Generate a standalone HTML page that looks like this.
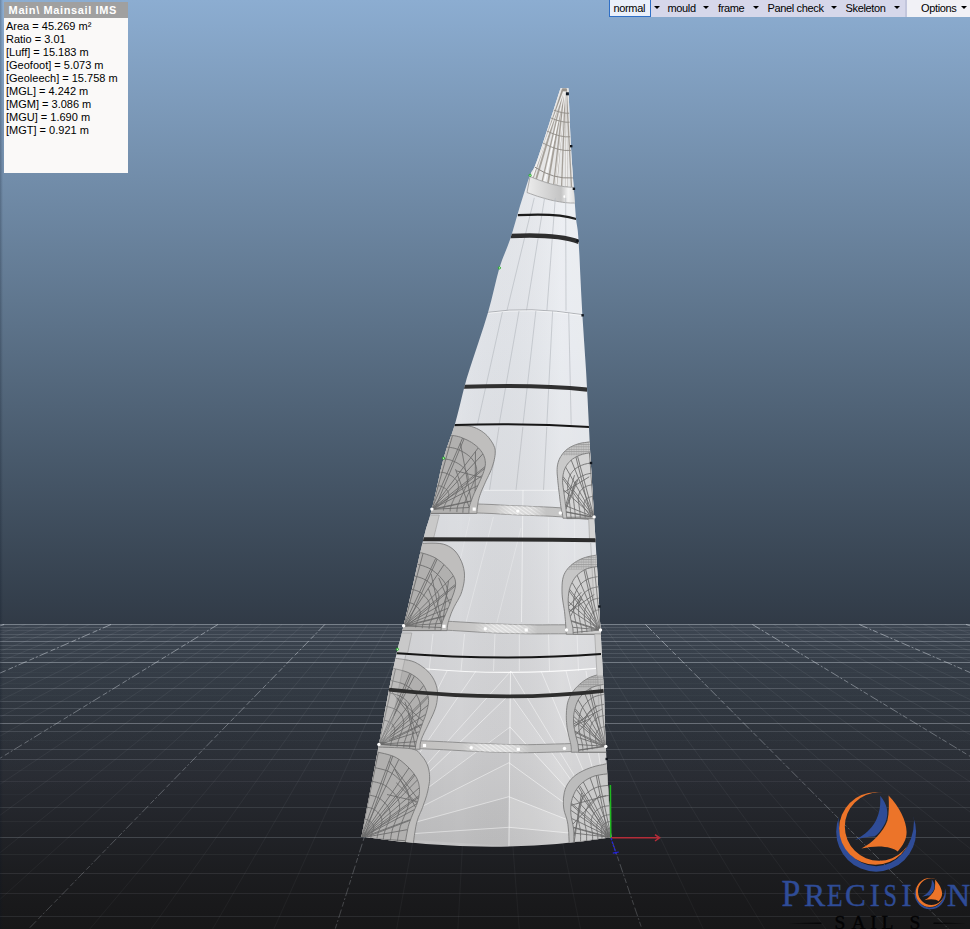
<!DOCTYPE html>
<html lang="en"><head><meta charset="utf-8"><title>Main\ Mainsail IMS</title>
<style>
html,body{margin:0;padding:0}
body{width:970px;height:929px;overflow:hidden;position:relative;font-family:"Liberation Sans",sans-serif;
background:linear-gradient(to bottom,#8cadd1 0px,#7692b0 150px,#60778f 300px,#48596b 460px,#343f4c 600px,#313a46 624px,#2d343d 700px,#282b32 780px,#212328 830px,#1c1d20 870px,#19191b 905px,#171718 929px)}
#edge{position:absolute;left:0;top:0;width:3px;height:929px;background:linear-gradient(to right,rgba(10,20,35,.26),rgba(10,20,35,.12) 50%,rgba(10,20,35,0))}
#vp{position:absolute;left:0;top:0;width:970px;height:929px;display:block}
#info{position:absolute;left:4px;top:2px;width:124px;height:171px;background:#faf9f8;font-size:11px;line-height:13px;color:#000}
#info .t{height:16px;line-height:17px;background:#a0a0a0;color:#fff;font-weight:bold;padding-left:4.6px;white-space:nowrap;letter-spacing:.62px}
#info .b{padding:2px 0 0 2px}
#info .r{height:13px;white-space:nowrap}
#tb{position:absolute;left:609px;top:0;width:361px;height:17px;background:#d6d7ea;font-size:11px;line-height:17px;color:#000;letter-spacing:-.35px}
#tb .o{position:absolute;left:296px;top:0;width:65px;height:17px;background:#f1f1f6;border-left:2px solid #c3c6dc;box-sizing:border-box}
#tb span{position:absolute;top:0;white-space:nowrap}
#tb .sel{position:absolute;left:0;top:-1px;width:42px;height:18px;box-sizing:border-box;border:1px solid #2f6fc6;background:#eaf0fa}
#tb i{position:absolute;top:6px;width:0;height:0;border-left:3px solid transparent;border-right:3px solid transparent;border-top:3px solid #000}
</style></head><body>
<svg id="vp" width="970" height="929" viewBox="0 0 970 929">
<defs>
<linearGradient id="sailg" gradientUnits="userSpaceOnUse" x1="0" y1="88" x2="0" y2="848"><stop offset="0" stop-color="#eef0f4"/><stop offset=".34" stop-color="#e6e9ee"/><stop offset=".55" stop-color="#dfe1e5"/><stop offset=".7" stop-color="#d9dadd"/><stop offset=".86" stop-color="#d3d3d5"/><stop offset="1" stop-color="#c6c6c7"/></linearGradient>
<linearGradient id="sailv" x1="0" y1="0" x2="1" y2="0"><stop offset="0" stop-color="#000" stop-opacity=".055"/><stop offset=".4" stop-color="#000" stop-opacity=".015"/><stop offset=".8" stop-color="#fff" stop-opacity=".12"/><stop offset="1" stop-color="#fff" stop-opacity=".02"/></linearGradient>
<linearGradient id="gmaj" gradientUnits="userSpaceOnUse" x1="0" y1="624" x2="0" y2="929"><stop offset="0" stop-color="#dde3ea" stop-opacity=".5"/><stop offset=".35" stop-color="#dde3ea" stop-opacity=".34"/><stop offset="1" stop-color="#dde3ea" stop-opacity=".2"/></linearGradient>
<linearGradient id="gmin" gradientUnits="userSpaceOnUse" x1="0" y1="624" x2="0" y2="929"><stop offset="0" stop-color="#d5dbe2" stop-opacity=".07"/><stop offset=".5" stop-color="#d5dbe2" stop-opacity=".055"/><stop offset="1" stop-color="#d5dbe2" stop-opacity=".04"/></linearGradient>
<linearGradient id="bandg" x1="0" y1="0" x2="1" y2="0"><stop offset="0" stop-color="#ececec"/><stop offset=".45" stop-color="#d2d2d2"/><stop offset=".7" stop-color="#c4c4c4"/><stop offset=".85" stop-color="#f2f2f2"/><stop offset="1" stop-color="#dcdcdc"/></linearGradient>
<linearGradient id="reefg" x1="0" y1="0" x2="1" y2="0"><stop offset="0" stop-color="#bdbbb9"/><stop offset=".3" stop-color="#c5c4c3"/><stop offset=".5" stop-color="#d2d2d2"/><stop offset=".68" stop-color="#c4c4c4"/><stop offset="1" stop-color="#c8c8c8"/></linearGradient>
<pattern id="hatch" width="3" height="3" patternUnits="userSpaceOnUse" patternTransform="rotate(35)"><rect width="3" height="3" fill="none"/><line x1="0" y1="1.5" x2="3" y2="1.5" stroke="#fff" stroke-opacity=".55" stroke-width=".9"/></pattern>
<pattern id="mesh" width="2.4" height="2.4" patternUnits="userSpaceOnUse"><path d="M0 .5H2.4" stroke="#8a8a8a" stroke-width=".6" fill="none"/><path d="M.5 0V2.4" stroke="#9a9a9a" stroke-width=".35" fill="none"/></pattern>
<linearGradient id="hfade" x1="0" y1="0" x2="1" y2="0"><stop offset="0" stop-color="#000"/><stop offset=".3" stop-color="#fff"/><stop offset=".7" stop-color="#fff"/><stop offset="1" stop-color="#000"/></linearGradient>
<clipPath id="sailclip"><path d="M560.5 88.3 L555.9 102.5 L549.3 123.2 L542.4 144.4 L537.2 160 L534.3 167.4 L532.8 170.2 L531.6 171.7 L530 175.3 L527.7 181.8 L525.2 189.5 L522.6 197.7 L520 206 L517.5 214.4 L515 223.2 L512.5 231.8 L509.9 240 L507.3 247 L504.7 253.4 L502.1 260 L499.4 268 L496.8 277.7 L494.2 288.4 L491.4 300 L488.1 312.3 L483.8 326.3 L478.7 341.8 L473.8 356.5 L470 368.1 L467.8 374.9 L466.7 378.4 L465.9 381.4 L464.5 386.5 L462.4 394.8 L460 404.7 L457.4 415.1 L454.8 424.8 L452.1 433.1 L449.3 440.7 L446.5 448.7 L443.6 458.2 L440.6 470.2 L437.6 483.9 L434.6 497.4 L431.9 509.1 L429.8 516.7 L428.2 521.9 L426.2 528.1 L423.4 539.1 L418.9 558.3 L413.4 582.8 L407.9 607.2 L403.6 625.8 L401.1 635.9 L399.8 640.9 L398.8 644.3 L397.4 650 L395.5 658.4 L393.4 667.8 L391.3 678.1 L389 689.4 L386.8 701.2 L384.5 713.6 L382 727.7 L378.9 744.4 L374.7 767 L369.6 793.9 L364.8 819.1 L361.5 836.5 Q492 856.5 611.3 837.3 L611.3 837.3 L610.2 820.1 L608.7 795.3 L607 768.8 L605.8 746.4 L605.1 729.2 L604.6 714.1 L604.3 701.4 L604 691 L603.7 684.5 L603.5 681.2 L603.2 678.4 L602.9 673 L602.4 663.6 L601.7 651.8 L601.1 640 L600.5 630 L600.2 623.8 L599.9 619.7 L599.7 615 L599.2 606.5 L598.4 591.8 L597.4 573 L596.3 554.2 L595.5 539.6 L595 531.5 L594.8 527.4 L594.5 523.7 L594.1 516.9 L593.4 505.2 L592.5 490.8 L591.6 476 L590.8 463 L590.2 453 L589.8 444.6 L589.4 436.2 L588.9 426 L588.3 413.3 L587.6 399.2 L586.8 384.4 L586 370 L585.1 356.4 L584.2 343.1 L583.3 329.3 L582.3 314 L581.3 295.5 L580.3 274.9 L579.4 255.3 L578.5 240 L577.8 231 L577.1 226.2 L576.5 222.8 L575.9 218 L575.4 211.5 L574.9 204.6 L574.4 197 L573.8 188.6 L573.1 179.3 L572.4 169.2 L571.6 158.2 L570.9 146.2 L570.2 131.5 L569.5 114.6 L568.9 99.1 L568.5 88.3Z"/></clipPath>
</defs>
<linearGradient id="haze" gradientUnits="userSpaceOnUse" x1="0" y1="624" x2="0" y2="800"><stop offset="0" stop-color="#dfe6ee" stop-opacity=".07"/><stop offset=".22" stop-color="#dfe6ee" stop-opacity=".04"/><stop offset=".45" stop-color="#dfe6ee" stop-opacity=".022"/><stop offset=".8" stop-color="#dfe6ee" stop-opacity=".008"/><stop offset="1" stop-color="#dfe6ee" stop-opacity="0"/></linearGradient>
<rect x="0" y="624" width="970" height="176" fill="url(#haze)"/>
<g id="grid" fill="none" shape-rendering="auto">
<path d="M0 624.5H970" stroke="#cfd6df" stroke-opacity="0.4" stroke-width="1"/>
<path d="M0 627.5H970" stroke="#cfd6df" stroke-opacity="0.15" stroke-width="1"/>
<path d="M0 630.5H970" stroke="#cfd6df" stroke-opacity="0.09" stroke-width="1"/>
<path d="M0 634.5H970" stroke="#cfd6df" stroke-opacity="0.15" stroke-width="1"/>
<path d="M0 637.5H970" stroke="#cfd6df" stroke-opacity="0.15" stroke-width="1"/>
<path d="M0 641.5H970" stroke="#cfd6df" stroke-opacity="0.32" stroke-width="1"/>
<path d="M0 645.5H970" stroke="#cfd6df" stroke-opacity="0.15" stroke-width="1"/>
<path d="M0 649.5H970" stroke="#cfd6df" stroke-opacity="0.15" stroke-width="1"/>
<path d="M0 653.5H970" stroke="#cfd6df" stroke-opacity="0.15" stroke-width="1"/>
<path d="M0 657.5H970" stroke="#cfd6df" stroke-opacity="0.13" stroke-width="1"/>
<path d="M0 662.5H970" stroke="#cfd6df" stroke-opacity="0.4" stroke-width="1"/>
<path d="M0 667.5H970" stroke="#cfd6df" stroke-opacity="0.03" stroke-width="1"/>
<path d="M0 672.5H970" stroke="#cfd6df" stroke-opacity="0.03" stroke-width="1"/>
<path d="M0 677.5H970" stroke="#cfd6df" stroke-opacity="0.16" stroke-width="1"/>
<path d="M0 683.5H970" stroke="#cfd6df" stroke-opacity="0.03" stroke-width="1"/>
<path d="M0 688.5H970" stroke="#cfd6df" stroke-opacity="0.21" stroke-width="1"/>
<path d="M0 695.5H970" stroke="#cfd6df" stroke-opacity="0.03" stroke-width="1"/>
<path d="M0 701.5H970" stroke="#cfd6df" stroke-opacity="0.16" stroke-width="1"/>
<path d="M0 708.5H970" stroke="#cfd6df" stroke-opacity="0.16" stroke-width="1"/>
<path d="M0 715.5H970" stroke="#cfd6df" stroke-opacity="0.16" stroke-width="1"/>
<path d="M0 723.5H970" stroke="#cfd6df" stroke-opacity="0.36" stroke-width="1"/>
<path d="M0 731.5H970" stroke="#cfd6df" stroke-opacity="0.15" stroke-width="1"/>
<path d="M0 740.5H970" stroke="#cfd6df" stroke-opacity="0.03" stroke-width="1"/>
<path d="M0 749.5H970" stroke="#cfd6df" stroke-opacity="0.16" stroke-width="1"/>
<path d="M0 759.5H970" stroke="#cfd6df" stroke-opacity="0.16" stroke-width="1"/>
<path d="M0 770.5H970" stroke="#cfd6df" stroke-opacity="0.04" stroke-width="1"/>
<path d="M0 781.5H970" stroke="#cfd6df" stroke-opacity="0.07" stroke-width="1"/>
<path d="M0 794.5H970" stroke="#cfd6df" stroke-opacity="0.03" stroke-width="1"/>
<path d="M0 807.5H970" stroke="#cfd6df" stroke-opacity="0.12" stroke-width="1"/>
<path d="M0 821.5H970" stroke="#cfd6df" stroke-opacity="0.05" stroke-width="1"/>
<path d="M0 837.5H970" stroke="#cfd6df" stroke-opacity="0.2" stroke-width="1"/>
<path d="M0 854.5H970" stroke="#cfd6df" stroke-opacity="0.06" stroke-width="1"/>
<path d="M0 873.5H970" stroke="#cfd6df" stroke-opacity="0.11" stroke-width="1"/>
<path d="M0 893.5H970" stroke="#cfd6df" stroke-opacity="0.09" stroke-width="1"/>
<path d="M0 916.5H970" stroke="#cfd6df" stroke-opacity="0.1" stroke-width="1"/>
<path d="M-188.3 624.5L-1468.3 935" stroke="url(#gmin)" stroke-width="1"/>
<path d="M-166.9 624.5L-1406.2 935" stroke="url(#gmin)" stroke-width="1"/>
<path d="M-145.5 624.5L-1344.1 935" stroke="url(#gmin)" stroke-width="1"/>
<path d="M-124.1 624.5L-1281.9 935" stroke="url(#gmin)" stroke-width="1"/>
<path d="M-102.8 624.5L-1219.8 935" stroke="url(#gmaj)" stroke-width="1" stroke-dasharray="9 2 2 2 5 3"/>
<path d="M-81.4 624.5L-1157.7 935" stroke="url(#gmin)" stroke-width="1"/>
<path d="M-60 624.5L-1095.6 935" stroke="url(#gmin)" stroke-width="1"/>
<path d="M-38.6 624.5L-1033.4 935" stroke="url(#gmin)" stroke-width="1"/>
<path d="M-17.2 624.5L-971.3 935" stroke="url(#gmin)" stroke-width="1"/>
<path d="M4.1 624.5L-909.2 935" stroke="url(#gmaj)" stroke-width="1" stroke-dasharray="9 2 2 2 5 3"/>
<path d="M25.5 624.5L-847.1 935" stroke="url(#gmin)" stroke-width="1"/>
<path d="M46.9 624.5L-784.9 935" stroke="url(#gmin)" stroke-width="1"/>
<path d="M68.3 624.5L-722.8 935" stroke="url(#gmin)" stroke-width="1"/>
<path d="M89.6 624.5L-660.7 935" stroke="url(#gmin)" stroke-width="1"/>
<path d="M111 624.5L-598.6 935" stroke="url(#gmaj)" stroke-width="1" stroke-dasharray="9 2 2 2 5 3"/>
<path d="M132.4 624.5L-536.4 935" stroke="url(#gmin)" stroke-width="1"/>
<path d="M153.8 624.5L-474.3 935" stroke="url(#gmin)" stroke-width="1"/>
<path d="M175.2 624.5L-412.2 935" stroke="url(#gmin)" stroke-width="1"/>
<path d="M196.5 624.5L-350.1 935" stroke="url(#gmin)" stroke-width="1"/>
<path d="M217.9 624.5L-287.9 935" stroke="url(#gmaj)" stroke-width="1" stroke-dasharray="9 2 2 2 5 3"/>
<path d="M239.3 624.5L-225.8 935" stroke="url(#gmin)" stroke-width="1"/>
<path d="M260.7 624.5L-163.7 935" stroke="url(#gmin)" stroke-width="1"/>
<path d="M282 624.5L-101.6 935" stroke="url(#gmin)" stroke-width="1"/>
<path d="M303.4 624.5L-39.4 935" stroke="url(#gmin)" stroke-width="1"/>
<path d="M324.8 624.5L22.7 935" stroke="url(#gmaj)" stroke-width="1" stroke-dasharray="9 2 2 2 5 3"/>
<path d="M346.2 624.5L84.8 935" stroke="url(#gmin)" stroke-width="1"/>
<path d="M367.6 624.5L146.9 935" stroke="url(#gmin)" stroke-width="1"/>
<path d="M388.9 624.5L209.1 935" stroke="url(#gmin)" stroke-width="1"/>
<path d="M410.3 624.5L271.2 935" stroke="url(#gmin)" stroke-width="1"/>
<path d="M431.7 624.5L333.3 935" stroke="url(#gmaj)" stroke-width="1" stroke-dasharray="9 2 2 2 5 3"/>
<path d="M453.1 624.5L395.5 935" stroke="url(#gmin)" stroke-width="1"/>
<path d="M474.4 624.5L457.6 935" stroke="url(#gmin)" stroke-width="1"/>
<path d="M495.8 624.5L519.7 935" stroke="url(#gmin)" stroke-width="1"/>
<path d="M517.2 624.5L581.8 935" stroke="url(#gmin)" stroke-width="1"/>
<path d="M538.6 624.5L644 935" stroke="url(#gmaj)" stroke-width="1" stroke-dasharray="9 2 2 2 5 3"/>
<path d="M560 624.5L706.1 935" stroke="url(#gmin)" stroke-width="1"/>
<path d="M581.3 624.5L768.2 935" stroke="url(#gmin)" stroke-width="1"/>
<path d="M602.7 624.5L830.3 935" stroke="url(#gmin)" stroke-width="1"/>
<path d="M624.1 624.5L892.5 935" stroke="url(#gmin)" stroke-width="1"/>
<path d="M645.5 624.5L954.6 935" stroke="url(#gmaj)" stroke-width="1" stroke-dasharray="9 2 2 2 5 3"/>
<path d="M666.9 624.5L1016.7 935" stroke="url(#gmin)" stroke-width="1"/>
<path d="M688.2 624.5L1078.8 935" stroke="url(#gmin)" stroke-width="1"/>
<path d="M709.6 624.5L1141 935" stroke="url(#gmin)" stroke-width="1"/>
<path d="M731 624.5L1203.1 935" stroke="url(#gmin)" stroke-width="1"/>
<path d="M752.4 624.5L1265.2 935" stroke="url(#gmaj)" stroke-width="1" stroke-dasharray="9 2 2 2 5 3"/>
<path d="M773.7 624.5L1327.3 935" stroke="url(#gmin)" stroke-width="1"/>
<path d="M795.1 624.5L1389.5 935" stroke="url(#gmin)" stroke-width="1"/>
<path d="M816.5 624.5L1451.6 935" stroke="url(#gmin)" stroke-width="1"/>
<path d="M837.9 624.5L1513.7 935" stroke="url(#gmin)" stroke-width="1"/>
<path d="M859.3 624.5L1575.8 935" stroke="url(#gmaj)" stroke-width="1" stroke-dasharray="9 2 2 2 5 3"/>
<path d="M880.6 624.5L1638 935" stroke="url(#gmin)" stroke-width="1"/>
<path d="M902 624.5L1700.1 935" stroke="url(#gmin)" stroke-width="1"/>
<path d="M923.4 624.5L1762.2 935" stroke="url(#gmin)" stroke-width="1"/>
<path d="M944.8 624.5L1824.4 935" stroke="url(#gmin)" stroke-width="1"/>
<path d="M966.1 624.5L1886.5 935" stroke="url(#gmaj)" stroke-width="1" stroke-dasharray="9 2 2 2 5 3"/>
<path d="M987.5 624.5L1948.6 935" stroke="url(#gmin)" stroke-width="1"/>
<path d="M1008.9 624.5L2010.7 935" stroke="url(#gmin)" stroke-width="1"/>
<path d="M1030.3 624.5L2072.9 935" stroke="url(#gmin)" stroke-width="1"/>
<path d="M1051.7 624.5L2135 935" stroke="url(#gmin)" stroke-width="1"/>
<path d="M1073 624.5L2197.1 935" stroke="url(#gmaj)" stroke-width="1" stroke-dasharray="9 2 2 2 5 3"/>
<path d="M1094.4 624.5L2259.2 935" stroke="url(#gmin)" stroke-width="1"/>
<path d="M1115.8 624.5L2321.4 935" stroke="url(#gmin)" stroke-width="1"/>
<path d="M1137.2 624.5L2383.5 935" stroke="url(#gmin)" stroke-width="1"/>
<path d="M1158.5 624.5L2445.6 935" stroke="url(#gmin)" stroke-width="1"/>
<path d="M1179.9 624.5L2507.7 935" stroke="url(#gmaj)" stroke-width="1" stroke-dasharray="9 2 2 2 5 3"/>
</g>
<g id="sail">
<path d="M560.5 88.3 L555.9 102.5 L549.3 123.2 L542.4 144.4 L537.2 160 L534.3 167.4 L532.8 170.2 L531.6 171.7 L530 175.3 L527.7 181.8 L525.2 189.5 L522.6 197.7 L520 206 L517.5 214.4 L515 223.2 L512.5 231.8 L509.9 240 L507.3 247 L504.7 253.4 L502.1 260 L499.4 268 L496.8 277.7 L494.2 288.4 L491.4 300 L488.1 312.3 L483.8 326.3 L478.7 341.8 L473.8 356.5 L470 368.1 L467.8 374.9 L466.7 378.4 L465.9 381.4 L464.5 386.5 L462.4 394.8 L460 404.7 L457.4 415.1 L454.8 424.8 L452.1 433.1 L449.3 440.7 L446.5 448.7 L443.6 458.2 L440.6 470.2 L437.6 483.9 L434.6 497.4 L431.9 509.1 L429.8 516.7 L428.2 521.9 L426.2 528.1 L423.4 539.1 L418.9 558.3 L413.4 582.8 L407.9 607.2 L403.6 625.8 L401.1 635.9 L399.8 640.9 L398.8 644.3 L397.4 650 L395.5 658.4 L393.4 667.8 L391.3 678.1 L389 689.4 L386.8 701.2 L384.5 713.6 L382 727.7 L378.9 744.4 L374.7 767 L369.6 793.9 L364.8 819.1 L361.5 836.5 Q492 856.5 611.3 837.3 L611.3 837.3 L610.2 820.1 L608.7 795.3 L607 768.8 L605.8 746.4 L605.1 729.2 L604.6 714.1 L604.3 701.4 L604 691 L603.7 684.5 L603.5 681.2 L603.2 678.4 L602.9 673 L602.4 663.6 L601.7 651.8 L601.1 640 L600.5 630 L600.2 623.8 L599.9 619.7 L599.7 615 L599.2 606.5 L598.4 591.8 L597.4 573 L596.3 554.2 L595.5 539.6 L595 531.5 L594.8 527.4 L594.5 523.7 L594.1 516.9 L593.4 505.2 L592.5 490.8 L591.6 476 L590.8 463 L590.2 453 L589.8 444.6 L589.4 436.2 L588.9 426 L588.3 413.3 L587.6 399.2 L586.8 384.4 L586 370 L585.1 356.4 L584.2 343.1 L583.3 329.3 L582.3 314 L581.3 295.5 L580.3 274.9 L579.4 255.3 L578.5 240 L577.8 231 L577.1 226.2 L576.5 222.8 L575.9 218 L575.4 211.5 L574.9 204.6 L574.4 197 L573.8 188.6 L573.1 179.3 L572.4 169.2 L571.6 158.2 L570.9 146.2 L570.2 131.5 L569.5 114.6 L568.9 99.1 L568.5 88.3Z" fill="url(#sailg)"/>
<path d="M560.5 88.3 L555.9 102.5 L549.3 123.2 L542.4 144.4 L537.2 160 L534.3 167.4 L532.8 170.2 L531.6 171.7 L530 175.3 L527.7 181.8 L525.2 189.5 L522.6 197.7 L520 206 L517.5 214.4 L515 223.2 L512.5 231.8 L509.9 240 L507.3 247 L504.7 253.4 L502.1 260 L499.4 268 L496.8 277.7 L494.2 288.4 L491.4 300 L488.1 312.3 L483.8 326.3 L478.7 341.8 L473.8 356.5 L470 368.1 L467.8 374.9 L466.7 378.4 L465.9 381.4 L464.5 386.5 L462.4 394.8 L460 404.7 L457.4 415.1 L454.8 424.8 L452.1 433.1 L449.3 440.7 L446.5 448.7 L443.6 458.2 L440.6 470.2 L437.6 483.9 L434.6 497.4 L431.9 509.1 L429.8 516.7 L428.2 521.9 L426.2 528.1 L423.4 539.1 L418.9 558.3 L413.4 582.8 L407.9 607.2 L403.6 625.8 L401.1 635.9 L399.8 640.9 L398.8 644.3 L397.4 650 L395.5 658.4 L393.4 667.8 L391.3 678.1 L389 689.4 L386.8 701.2 L384.5 713.6 L382 727.7 L378.9 744.4 L374.7 767 L369.6 793.9 L364.8 819.1 L361.5 836.5 Q492 856.5 611.3 837.3 L611.3 837.3 L610.2 820.1 L608.7 795.3 L607 768.8 L605.8 746.4 L605.1 729.2 L604.6 714.1 L604.3 701.4 L604 691 L603.7 684.5 L603.5 681.2 L603.2 678.4 L602.9 673 L602.4 663.6 L601.7 651.8 L601.1 640 L600.5 630 L600.2 623.8 L599.9 619.7 L599.7 615 L599.2 606.5 L598.4 591.8 L597.4 573 L596.3 554.2 L595.5 539.6 L595 531.5 L594.8 527.4 L594.5 523.7 L594.1 516.9 L593.4 505.2 L592.5 490.8 L591.6 476 L590.8 463 L590.2 453 L589.8 444.6 L589.4 436.2 L588.9 426 L588.3 413.3 L587.6 399.2 L586.8 384.4 L586 370 L585.1 356.4 L584.2 343.1 L583.3 329.3 L582.3 314 L581.3 295.5 L580.3 274.9 L579.4 255.3 L578.5 240 L577.8 231 L577.1 226.2 L576.5 222.8 L575.9 218 L575.4 211.5 L574.9 204.6 L574.4 197 L573.8 188.6 L573.1 179.3 L572.4 169.2 L571.6 158.2 L570.9 146.2 L570.2 131.5 L569.5 114.6 L568.9 99.1 L568.5 88.3Z" fill="url(#sailv)"/>
<g clip-path="url(#sailclip)">
<path d="M558 86 L571 86 L573.8 187.3 L571.5 187.3 L569.1 187.1 L566.6 186.9 L564.1 186.6 L561.6 186.2 L559 185.8 L556.3 185.2 L553.6 184.6 L550.8 183.9 L548 183.1 L545.1 182.2 L542.2 181.2 L539.2 180.2 L536.2 179 L533.1 177.8 L530 176.5Z" fill="#e6e6e6"/>
<path d="M562.8 88.5L533.1 177.8" stroke="#9a948c" stroke-opacity=".85" stroke-width="1.3"/>
<path d="M563.2 88.5L536.2 179" stroke="#9a948c" stroke-opacity=".85" stroke-width="1.8"/>
<path d="M563.7 88.5L542.2 181.2" stroke="#9a948c" stroke-opacity=".85" stroke-width="1.3"/>
<path d="M564.1 88.5L548 183.1" stroke="#9a948c" stroke-opacity=".85" stroke-width="1.8"/>
<path d="M564.5 88.5L553.6 184.6" stroke="#9a948c" stroke-opacity=".85" stroke-width="1.3"/>
<path d="M565 88.5L556.3 185.2" stroke="#9a948c" stroke-opacity=".85" stroke-width="1.8"/>
<path d="M565.4 88.5L561.6 186.2" stroke="#9a948c" stroke-opacity=".85" stroke-width="1.3"/>
<path d="M565.9 88.5L566.6 186.9" stroke="#9a948c" stroke-opacity=".85" stroke-width="1.8"/>
<path d="M566.3 88.5L571.5 187.3" stroke="#9a948c" stroke-opacity=".85" stroke-width="1.3"/>
<path d="M563.6 91.5L532.5 176.5" stroke="#fff" stroke-opacity=".8" stroke-width="1.3"/>
<path d="M564.4 91.5L544.7 181.2" stroke="#fff" stroke-opacity=".8" stroke-width="1.3"/>
<path d="M565.1 91.5L556.1 184.6" stroke="#fff" stroke-opacity=".8" stroke-width="1.3"/>
<path d="M565.9 91.5L566.6 186.6" stroke="#fff" stroke-opacity=".8" stroke-width="1.3"/>
<path d="M553.5 110 Q563.5 113.8 569.5 113.2" stroke="#8f8b86" stroke-width=".9" fill="none"/>
<path d="M551 118 Q562.4 122.9 569.8 122.2" stroke="#8f8b86" stroke-width=".9" fill="none"/>
<path d="M546.8 131 Q560.6 137.8 570.5 136.8" stroke="#8f8b86" stroke-width=".9" fill="none"/>
<path d="M542.9 143 Q559 151.7 571.1 150.4" stroke="#8f8b86" stroke-width=".9" fill="none"/>
<path d="M534.8 167.1 Q553.4 179.5 572.8 177.9" stroke="#8f8b86" stroke-width="1" fill="none"/>
<path d="M530 176.5 L533.1 177.8 L536.2 179 L539.2 180.2 L542.2 181.2 L545.1 182.2 L548 183.1 L550.8 183.9 L553.6 184.6 L556.3 185.2 L559 185.8 L561.6 186.2 L564.1 186.6 L566.6 186.9 L569.1 187.1 L571.5 187.3 L573.8 187.3 L575.5 203 L573 203 L570.5 203 L567.8 202.8 L565.1 202.6 L562.4 202.3 L559.5 201.8 L556.6 201.3 L553.6 200.7 L550.5 200 L547.4 199.2 L544.2 198.3 L540.9 197.3 L537.5 196.3 L534.1 195.1 L530.6 193.8 L527 192.5Z" fill="url(#bandg)" stroke="#9b9b9b" stroke-width=".8"/>
<ellipse cx="564.2" cy="196.5" rx=".8" ry="1.6" fill="#fff"/>
<path d="M534.3 197.8L506.9 310.8" stroke="#b9bdc3" stroke-width=".7"/>
<path d="M544.6 197.8L526.5 310.5" stroke="#b9bdc3" stroke-width=".7"/>
<path d="M555.3 197.8L546.9 310.5" stroke="#b9bdc3" stroke-width=".7"/>
<path d="M565.7 197.8L566 310.8" stroke="#b9bdc3" stroke-width=".7"/>
<path d="M488.1 312.3 Q528.8 306.1 582.3 314.6" stroke="#a9abb0" stroke-width=".9" fill="none"/>
<path d="M488.1 313.3 Q528.8 307.1 582.3 315.6" stroke="#fff" stroke-opacity=".7" stroke-width=".8" fill="none"/>
<path d="M502.4 312L477.3 425" stroke="#b9bdc3" stroke-width=".7"/>
<path d="M519 311.1L499 425" stroke="#b9bdc3" stroke-width=".7"/>
<path d="M535.9 310.8L522.9 425" stroke="#b9bdc3" stroke-width=".7"/>
<path d="M552.6 311.1L546.8 425" stroke="#b9bdc3" stroke-width=".7"/>
<path d="M568.7 312.3L571.2 425" stroke="#b9bdc3" stroke-width=".7"/>
<path d="M499 427L489.5 490" stroke="#b9bbc0" stroke-width=".7"/>
<path d="M522.9 427L516 490" stroke="#b9bbc0" stroke-width=".7"/>
<path d="M546.8 427L543.5 490" stroke="#b9bbc0" stroke-width=".7"/>
<path d="M523 490L521.5 622" stroke="#fff" stroke-opacity="0.58" stroke-width=".9"/>
<path d="M484 490.3L558 490.3" stroke="#fff" stroke-opacity="0.58" stroke-width=".9"/>
<path d="M493.4 517L465.8 623" stroke="#fff" stroke-opacity="0.32" stroke-width=".9"/>
<path d="M521 528L496.8 623" stroke="#fff" stroke-opacity="0.29" stroke-width=".9"/>
<path d="M548.5 517L548.5 623" stroke="#fff" stroke-opacity="0.25" stroke-width=".9"/>
<path d="M574.3 517L575.5 623" stroke="#fff" stroke-opacity="0.25" stroke-width=".9"/>
<path d="M470 517L446 623" stroke="#fff" stroke-opacity="0.22" stroke-width=".9"/>
<path d="M433 634L429 671" stroke="#fff" stroke-opacity="0.43" stroke-width=".9"/>
<path d="M464.5 634L461 671" stroke="#fff" stroke-opacity="0.43" stroke-width=".9"/>
<path d="M495 634L493.5 671" stroke="#fff" stroke-opacity="0.43" stroke-width=".9"/>
<path d="M519.3 634L519.3 671" stroke="#fff" stroke-opacity="0.43" stroke-width=".9"/>
<path d="M548.5 634L549.5 671" stroke="#fff" stroke-opacity="0.43" stroke-width=".9"/>
<path d="M577 634L578.5 671" stroke="#fff" stroke-opacity="0.43" stroke-width=".9"/>
<path d="M510.5 671L508.9 846" stroke="#fff" stroke-opacity="0.65" stroke-width=".9"/>
<path d="M361.5 837L508.9 827.3" stroke="#fff" stroke-opacity="0.58" stroke-width=".9"/>
<path d="M611.3 837L508.9 827.3" stroke="#fff" stroke-opacity="0.58" stroke-width=".9"/>
<path d="M361.5 837L508.9 796.7" stroke="#fff" stroke-opacity="0.58" stroke-width=".9"/>
<path d="M611.3 837L508.9 796.7" stroke="#fff" stroke-opacity="0.58" stroke-width=".9"/>
<path d="M361.5 837L508.9 762.7" stroke="#fff" stroke-opacity="0.58" stroke-width=".9"/>
<path d="M611.3 837L508.9 762.7" stroke="#fff" stroke-opacity="0.58" stroke-width=".9"/>
<path d="M361.5 837L510.1 727" stroke="#fff" stroke-opacity="0.58" stroke-width=".9"/>
<path d="M611.3 837L510.1 727" stroke="#fff" stroke-opacity="0.58" stroke-width=".9"/>
<path d="M361.5 837L510.1 694" stroke="#fff" stroke-opacity="0.58" stroke-width=".9"/>
<path d="M611.3 837L510.1 694" stroke="#fff" stroke-opacity="0.58" stroke-width=".9"/>
<path d="M361.5 837L511 671" stroke="#fff" stroke-opacity="0.5" stroke-width=".9"/>
<path d="M361.5 837L476 671" stroke="#fff" stroke-opacity="0.5" stroke-width=".9"/>
<path d="M361.5 837L447 671" stroke="#fff" stroke-opacity="0.5" stroke-width=".9"/>
<path d="M361.5 837L424 671" stroke="#fff" stroke-opacity="0.5" stroke-width=".9"/>
<path d="M611.3 837L511 671" stroke="#fff" stroke-opacity="0.5" stroke-width=".9"/>
<path d="M611.3 837L541 671" stroke="#fff" stroke-opacity="0.5" stroke-width=".9"/>
<path d="M611.3 837L566 671" stroke="#fff" stroke-opacity="0.5" stroke-width=".9"/>
<path d="M611.3 837L586 671" stroke="#fff" stroke-opacity="0.5" stroke-width=".9"/>
<path d="M424 668.8 Q508 676.2 596 668.4" stroke="#fff" stroke-opacity=".85" stroke-width="1.1" fill="none"/>
<path d="M361.5 837L508.9 762.7L508.9 846Z" fill="#000" fill-opacity=".03"/>
<path d="M611.3 837L508.9 796.7L508.9 827.3Z" fill="#fff" fill-opacity=".14"/>
<path d="M361.5 837L508.9 796.7L508.9 762.7Z" fill="#fff" fill-opacity=".10"/>
<path d="M611.3 837L508.9 727L508.9 694Z" fill="#fff" fill-opacity=".10"/>
<path d="M361.5 837L508.9 762.7L508.9 727Z" fill="#000" fill-opacity=".025"/>
<path d="M426.9 503.9 L433.4 503.8 L442.6 503.8 L453.3 503.7 L464.2 503.8 L474.2 503.9 L483.2 504.2 L492 504.5 L500.6 505 L509.2 505.5 L517.8 505.9 L526.4 506.2 L535.1 506.6 L543.6 506.9 L552.1 507.3 L560.3 507.8 L568.9 508.5 L577.9 509.4 L586.6 510.3 L593.9 511.1 L599.1 511.7 L599.1 520.7 L593.9 520.1 L586.6 519.3 L577.9 518.4 L568.9 517.5 L560.3 516.8 L552.1 516.3 L543.6 515.9 L535.1 515.6 L526.4 515.2 L517.8 514.9 L509.2 514.5 L500.6 514 L492 513.5 L483.2 513.2 L474.2 512.9 L464.2 512.8 L453.3 512.7 L442.6 512.8 L433.4 512.8 L426.9 512.9Z" fill="url(#reefg)" stroke="#8a8a8a" stroke-width=".9"/>
<mask id="hx194" maskUnits="userSpaceOnUse" x="495" y="489.1" width="52" height="40"><rect x="495" y="489.1" width="52" height="40" fill="url(#hfade)"/></mask>
<g mask="url(#hx194)"><path d="M426.9 503.9 L433.4 503.8 L442.6 503.8 L453.3 503.7 L464.2 503.8 L474.2 503.9 L483.2 504.2 L492 504.5 L500.6 505 L509.2 505.5 L517.8 505.9 L526.4 506.2 L535.1 506.6 L543.6 506.9 L552.1 507.3 L560.3 507.8 L568.9 508.5 L577.9 509.4 L586.6 510.3 L593.9 511.1 L599.1 511.7 L599.1 520.7 L593.9 520.1 L586.6 519.3 L577.9 518.4 L568.9 517.5 L560.3 516.8 L552.1 516.3 L543.6 515.9 L535.1 515.6 L526.4 515.2 L517.8 514.9 L509.2 514.5 L500.6 514 L492 513.5 L483.2 513.2 L474.2 512.9 L464.2 512.8 L453.3 512.7 L442.6 512.8 L433.4 512.8 L426.9 512.9Z" fill="#e8e8e8" fill-opacity=".5"/><path d="M426.9 503.9 L433.4 503.8 L442.6 503.8 L453.3 503.7 L464.2 503.8 L474.2 503.9 L483.2 504.2 L492 504.5 L500.6 505 L509.2 505.5 L517.8 505.9 L526.4 506.2 L535.1 506.6 L543.6 506.9 L552.1 507.3 L560.3 507.8 L568.9 508.5 L577.9 509.4 L586.6 510.3 L593.9 511.1 L599.1 511.7 L599.1 520.7 L593.9 520.1 L586.6 519.3 L577.9 518.4 L568.9 517.5 L560.3 516.8 L552.1 516.3 L543.6 515.9 L535.1 515.6 L526.4 515.2 L517.8 514.9 L509.2 514.5 L500.6 514 L492 513.5 L483.2 513.2 L474.2 512.9 L464.2 512.8 L453.3 512.7 L442.6 512.8 L433.4 512.8 L426.9 512.9Z" fill="url(#hatch)"/></g>
<path d="M398.6 620.6 L404.8 620.6 L413.7 620.7 L424 620.7 L434.5 620.9 L444 621.1 L452.5 621.5 L460.8 622 L469 622.5 L477.1 623 L485.3 623.5 L493.5 623.8 L501.7 624.1 L509.9 624.4 L518.1 624.6 L526.2 624.8 L534.3 624.9 L542.4 624.9 L550.5 624.8 L558.5 624.8 L566.5 624.8 L575 624.8 L584.1 624.8 L592.8 624.8 L600.2 624.8 L605.5 624.8 L605.5 633.8 L600.2 633.8 L592.8 633.8 L584.1 633.8 L575 633.8 L566.5 633.8 L558.5 633.8 L550.5 633.8 L542.4 633.9 L534.3 633.9 L526.2 633.8 L518.1 633.6 L509.9 633.4 L501.7 633.1 L493.5 632.8 L485.3 632.5 L477.1 632 L469 631.5 L460.8 631 L452.5 630.5 L444 630.1 L434.5 629.9 L424 629.7 L413.7 629.7 L404.8 629.6 L398.6 629.6Z" fill="url(#reefg)" stroke="#8a8a8a" stroke-width=".9"/>
<mask id="hx197" maskUnits="userSpaceOnUse" x="474" y="605.8" width="64" height="40"><rect x="474" y="605.8" width="64" height="40" fill="url(#hfade)"/></mask>
<g mask="url(#hx197)"><path d="M398.6 620.6 L404.8 620.6 L413.7 620.7 L424 620.7 L434.5 620.9 L444 621.1 L452.5 621.5 L460.8 622 L469 622.5 L477.1 623 L485.3 623.5 L493.5 623.8 L501.7 624.1 L509.9 624.4 L518.1 624.6 L526.2 624.8 L534.3 624.9 L542.4 624.9 L550.5 624.8 L558.5 624.8 L566.5 624.8 L575 624.8 L584.1 624.8 L592.8 624.8 L600.2 624.8 L605.5 624.8 L605.5 633.8 L600.2 633.8 L592.8 633.8 L584.1 633.8 L575 633.8 L566.5 633.8 L558.5 633.8 L550.5 633.8 L542.4 633.9 L534.3 633.9 L526.2 633.8 L518.1 633.6 L509.9 633.4 L501.7 633.1 L493.5 632.8 L485.3 632.5 L477.1 632 L469 631.5 L460.8 631 L452.5 630.5 L444 630.1 L434.5 629.9 L424 629.7 L413.7 629.7 L404.8 629.6 L398.6 629.6Z" fill="#e8e8e8" fill-opacity=".5"/><path d="M398.6 620.6 L404.8 620.6 L413.7 620.7 L424 620.7 L434.5 620.9 L444 621.1 L452.5 621.5 L460.8 622 L469 622.5 L477.1 623 L485.3 623.5 L493.5 623.8 L501.7 624.1 L509.9 624.4 L518.1 624.6 L526.2 624.8 L534.3 624.9 L542.4 624.9 L550.5 624.8 L558.5 624.8 L566.5 624.8 L575 624.8 L584.1 624.8 L592.8 624.8 L600.2 624.8 L605.5 624.8 L605.5 633.8 L600.2 633.8 L592.8 633.8 L584.1 633.8 L575 633.8 L566.5 633.8 L558.5 633.8 L550.5 633.8 L542.4 633.9 L534.3 633.9 L526.2 633.8 L518.1 633.6 L509.9 633.4 L501.7 633.1 L493.5 632.8 L485.3 632.5 L477.1 632 L469 631.5 L460.8 631 L452.5 630.5 L444 630.1 L434.5 629.9 L424 629.7 L413.7 629.7 L404.8 629.6 L398.6 629.6Z" fill="url(#hatch)"/></g>
<path d="M373.9 739.8 L380.8 739.9 L390.7 740.1 L402.1 740.3 L413.8 740.5 L424.5 740.9 L434.1 741.3 L443.4 741.7 L452.7 742.2 L461.9 742.7 L471.2 743.2 L480.6 743.5 L490.1 743.9 L499.5 744.3 L508.9 744.5 L518.3 744.7 L527.6 744.7 L536.8 744.5 L546.1 744.3 L555.3 744 L564.5 743.8 L574.5 743.4 L585.2 742.9 L595.6 742.5 L604.5 742 L610.8 741.8 L610.8 749.8 L604.5 750 L595.6 750.5 L585.2 750.9 L574.5 751.4 L564.5 751.8 L555.3 752 L546.1 752.3 L536.8 752.5 L527.6 752.7 L518.3 752.7 L508.9 752.5 L499.5 752.3 L490.1 751.9 L480.6 751.5 L471.2 751.2 L461.9 750.7 L452.7 750.2 L443.4 749.7 L434.1 749.3 L424.5 748.9 L413.8 748.5 L402.1 748.3 L390.7 748.1 L380.8 747.9 L373.9 747.8Z" fill="url(#reefg)" stroke="#8a8a8a" stroke-width=".9"/>
<mask id="hx200" maskUnits="userSpaceOnUse" x="461" y="724.4" width="69" height="40"><rect x="461" y="724.4" width="69" height="40" fill="url(#hfade)"/></mask>
<g mask="url(#hx200)"><path d="M373.9 739.8 L380.8 739.9 L390.7 740.1 L402.1 740.3 L413.8 740.5 L424.5 740.9 L434.1 741.3 L443.4 741.7 L452.7 742.2 L461.9 742.7 L471.2 743.2 L480.6 743.5 L490.1 743.9 L499.5 744.3 L508.9 744.5 L518.3 744.7 L527.6 744.7 L536.8 744.5 L546.1 744.3 L555.3 744 L564.5 743.8 L574.5 743.4 L585.2 742.9 L595.6 742.5 L604.5 742 L610.8 741.8 L610.8 749.8 L604.5 750 L595.6 750.5 L585.2 750.9 L574.5 751.4 L564.5 751.8 L555.3 752 L546.1 752.3 L536.8 752.5 L527.6 752.7 L518.3 752.7 L508.9 752.5 L499.5 752.3 L490.1 751.9 L480.6 751.5 L471.2 751.2 L461.9 750.7 L452.7 750.2 L443.4 749.7 L434.1 749.3 L424.5 748.9 L413.8 748.5 L402.1 748.3 L390.7 748.1 L380.8 747.9 L373.9 747.8Z" fill="#e8e8e8" fill-opacity=".5"/><path d="M373.9 739.8 L380.8 739.9 L390.7 740.1 L402.1 740.3 L413.8 740.5 L424.5 740.9 L434.1 741.3 L443.4 741.7 L452.7 742.2 L461.9 742.7 L471.2 743.2 L480.6 743.5 L490.1 743.9 L499.5 744.3 L508.9 744.5 L518.3 744.7 L527.6 744.7 L536.8 744.5 L546.1 744.3 L555.3 744 L564.5 743.8 L574.5 743.4 L585.2 742.9 L595.6 742.5 L604.5 742 L610.8 741.8 L610.8 749.8 L604.5 750 L595.6 750.5 L585.2 750.9 L574.5 751.4 L564.5 751.8 L555.3 752 L546.1 752.3 L536.8 752.5 L527.6 752.7 L518.3 752.7 L508.9 752.5 L499.5 752.3 L490.1 751.9 L480.6 751.5 L471.2 751.2 L461.9 750.7 L452.7 750.2 L443.4 749.7 L434.1 749.3 L424.5 748.9 L413.8 748.5 L402.1 748.3 L390.7 748.1 L380.8 747.9 L373.9 747.8Z" fill="url(#hatch)"/></g>
<path d="M454.1 425.9 L456 425.9 L458.7 425.8 L461.8 425.7 L465.2 425.8 L468.4 426 L471.3 426.5 L473.9 427.3 L476.4 428.3 L478.8 429.5 L481.2 430.9 L483.3 432.4 L485.3 434 L487.1 435.7 L488.8 437.7 L490.4 439.8 L491.8 441.9 L493 443.9 L493.9 445.8 L494.6 447.5 L495 449.1 L495.2 450.6 L495.2 452.1 L495.2 453.7 L495 455.5 L494.7 457.5 L494.3 459.5 L493.8 461.7 L493.2 463.9 L492.5 466.1 L491.7 468.4 L490.8 470.7 L489.8 473 L488.6 475.4 L487.5 477.8 L486.3 480.1 L485.3 482.4 L484.3 484.7 L483.3 486.9 L482.3 489.1 L481.4 491.3 L480.6 493.4 L479.9 495.3 L479.3 497.1 L478.9 498.7 L478.5 500.2 L478.2 501.6 L478 503 L477.7 504.5 L477.5 506.1 L477.3 507.8 L477.1 509.5 L477 511.1 L476.9 512.4 L476.8 513.4 L424.7 513.4 L448.4 425.9Z" fill="#bfbebd" stroke="#7d7d7d" stroke-width=".9"/>
<path d="M449.8 435.1 L450.9 435.3 L452.5 435.5 L454.3 435.7 L456.4 436.1 L458.5 436.6 L460.5 437.2 L462.6 438 L464.8 439 L467.1 440 L469.3 441.2 L471.5 442.4 L473.4 443.7 L475.1 445 L476.8 446.4 L478.3 447.8 L479.7 449.3 L480.9 450.8 L482 452.3 L482.9 453.9 L483.7 455.5 L484.3 457.1 L484.8 458.7 L485.1 460.4 L485.3 462 L485.4 463.6 L485.3 465.2 L485 466.7 L484.7 468.3 L484.2 470 L483.7 471.7 L483.1 473.5 L482.3 475.5 L481.5 477.5 L480.6 479.5 L479.7 481.5 L478.8 483.5 L477.9 485.5 L477 487.5 L476 489.5 L475.1 491.4 L474.2 493.4 L473.4 495.3 L472.6 497.2 L471.9 499.1 L471.2 500.9 L470.6 502.7 L470 504.4 L469.6 506 L469.3 507.5 L469.1 509 L469 510.4 L468.9 511.6 L468.9 512.6 L468.8 513.4 L424.7 513.4 L445.4 435.1Z" fill="#b1b0af" stroke="#757575" stroke-width=".9"/>
<clipPath id="c204"><path d="M449.8 435.1 L450.9 435.3 L452.5 435.5 L454.3 435.7 L456.4 436.1 L458.5 436.6 L460.5 437.2 L462.6 438 L464.8 439 L467.1 440 L469.3 441.2 L471.5 442.4 L473.4 443.7 L475.1 445 L476.8 446.4 L478.3 447.8 L479.7 449.3 L480.9 450.8 L482 452.3 L482.9 453.9 L483.7 455.5 L484.3 457.1 L484.8 458.7 L485.1 460.4 L485.3 462 L485.4 463.6 L485.3 465.2 L485 466.7 L484.7 468.3 L484.2 470 L483.7 471.7 L483.1 473.5 L482.3 475.5 L481.5 477.5 L480.6 479.5 L479.7 481.5 L478.8 483.5 L477.9 485.5 L477 487.5 L476 489.5 L475.1 491.4 L474.2 493.4 L473.4 495.3 L472.6 497.2 L471.9 499.1 L471.2 500.9 L470.6 502.7 L470 504.4 L469.6 506 L469.3 507.5 L469.1 509 L469 510.4 L468.9 511.6 L468.9 512.6 L468.8 513.4 L424.7 513.4 L445.4 435.1Z"/></clipPath>
<g clip-path="url(#c204)" stroke="#6a6a6a" stroke-width=".85" fill="none">
<path d="M431.5 509.3L452.5 435.5"/>
<path d="M431.5 509.3L462.6 438"/>
<path d="M434.5 509.3L464.4 438"/>
<path d="M431.5 509.3L478.3 447.8"/>
<path d="M431.5 509.3L482.9 453.9"/>
<path d="M431.5 509.3L485 466.7"/>
<path d="M434.5 509.3L486.8 466.7"/>
<path d="M431.5 509.3L482.3 475.5"/>
<path d="M431.5 509.3L477.9 485.5"/>
<path d="M431.5 509.3L471.2 500.9"/>
<path d="M434.5 509.3L473 500.9"/>
<path d="M431.5 509.3L469.3 507.5"/>
<path d="M437.4 485.6 L437.7 485.6 L438.2 485.7 L438.8 485.8 L439.5 485.9 L440.1 486 L440.8 486.2 L441.4 486.5 L442.2 486.8 L442.9 487.1 L443.6 487.5 L444.3 487.9 L444.9 488.3 L445.5 488.7 L446 489.2 L446.5 489.6 L446.9 490.1 L447.3 490.6 L447.7 491.1 L448 491.6 L448.2 492.1 L448.4 492.6 L448.5 493.1 L448.7 493.6 L448.7 494.2 L448.7 494.7 L448.7 495.2 L448.6 495.7 L448.5 496.2 L448.4 496.7 L448.2 497.3 L448 497.9 L447.8 498.5 L447.5 499.1 L447.2 499.8 L446.9 500.4 L446.6 501 L446.4 501.7 L446.1 502.3 L445.8 503 L445.5 503.6 L445.2 504.2 L444.9 504.8 L444.7 505.4 L444.4 506 L444.2 506.6 L444 507.2 L443.8 507.7 L443.7 508.2 L443.6 508.7 L443.5 509.2 L443.5 509.6 L443.5 510 L443.5 510.4 L443.4 510.6"/>
<path d="M440.6 472.2 L441.2 472.3 L442 472.4 L442.9 472.5 L443.9 472.7 L445 472.9 L446 473.2 L447 473.7 L448.1 474.1 L449.3 474.7 L450.4 475.3 L451.5 475.9 L452.4 476.5 L453.3 477.1 L454.1 477.8 L454.9 478.6 L455.6 479.3 L456.2 480 L456.8 480.8 L457.2 481.6 L457.6 482.4 L457.9 483.2 L458.1 484 L458.3 484.8 L458.4 485.6 L458.4 486.4 L458.4 487.2 L458.3 488 L458.1 488.8 L457.9 489.6 L457.6 490.5 L457.3 491.4 L456.9 492.4 L456.5 493.4 L456 494.4 L455.6 495.4 L455.1 496.4 L454.7 497.4 L454.2 498.4 L453.8 499.4 L453.3 500.4 L452.9 501.3 L452.4 502.3 L452.1 503.2 L451.7 504.2 L451.4 505.1 L451 506 L450.8 506.9 L450.6 507.6 L450.4 508.4 L450.3 509.1 L450.2 509.8 L450.2 510.5 L450.2 511 L450.1 511.4"/>
<path d="M443.9 458.8 L444.7 459 L445.8 459.1 L447 459.3 L448.4 459.5 L449.8 459.8 L451.2 460.3 L452.6 460.8 L454.1 461.5 L455.7 462.2 L457.2 463 L458.7 463.8 L460 464.7 L461.2 465.6 L462.3 466.5 L463.3 467.5 L464.3 468.5 L465.1 469.5 L465.8 470.5 L466.5 471.6 L467 472.7 L467.4 473.8 L467.7 474.9 L467.9 476 L468.1 477.1 L468.1 478.2 L468.1 479.3 L467.9 480.3 L467.6 481.4 L467.3 482.6 L467 483.7 L466.6 485 L466.1 486.3 L465.5 487.7 L464.9 489 L464.3 490.4 L463.7 491.8 L463.1 493.1 L462.4 494.5 L461.8 495.8 L461.1 497.2 L460.5 498.5 L460 499.8 L459.5 501.1 L459 502.3 L458.5 503.6 L458.1 504.8 L457.7 506 L457.4 507.1 L457.2 508.1 L457.1 509.1 L457 510 L456.9 510.9 L456.9 511.6 L456.9 512.1"/>
<path d="M446.9 447 L447.8 447.1 L449.1 447.3 L450.7 447.5 L452.4 447.8 L454.2 448.2 L455.9 448.7 L457.6 449.4 L459.5 450.2 L461.4 451.1 L463.3 452.1 L465.1 453.1 L466.7 454.2 L468.2 455.3 L469.5 456.4 L470.8 457.6 L472 458.9 L473 460.1 L473.9 461.4 L474.7 462.7 L475.3 464.1 L475.8 465.4 L476.2 466.8 L476.5 468.2 L476.7 469.6 L476.7 470.9 L476.7 472.2 L476.5 473.5 L476.2 474.9 L475.8 476.3 L475.3 477.7 L474.8 479.3 L474.2 480.9 L473.5 482.6 L472.7 484.3 L472 486 L471.2 487.6 L470.5 489.3 L469.7 491 L468.9 492.6 L468.1 494.3 L467.4 495.9 L466.7 497.5 L466.1 499.1 L465.4 500.7 L464.9 502.3 L464.3 503.8 L463.9 505.2 L463.5 506.5 L463.2 507.8 L463.1 509 L463 510.2 L462.9 511.2 L462.9 512.1 L462.8 512.7"/>
<path d="M456.1 470.8L481.5 477.5"/>
<path d="M455.5 469.2L469.3 507.5"/>
<path d="M460.4 443.1L471.2 500.9"/>
<path d="M475.5 451.5L475.1 491.4"/>
</g>
<path d="M590 441.8 L588.6 442 L586.8 442.3 L584.5 442.6 L582.1 442.9 L579.8 443.4 L577.7 444 L575.8 444.7 L573.8 445.4 L572 446.3 L570.2 447.2 L568.5 448.3 L566.9 449.4 L565.5 450.6 L564.1 452 L562.9 453.4 L561.8 454.9 L560.8 456.5 L559.9 458 L559.2 459.5 L558.6 461 L558.1 462.6 L557.7 464.2 L557.4 465.9 L557.2 467.7 L557.1 469.7 L557.1 471.7 L557.2 473.9 L557.4 476.1 L557.6 478.3 L557.8 480.6 L558 482.9 L558.3 485.2 L558.5 487.6 L558.8 490 L559.1 492.3 L559.4 494.6 L559.7 496.9 L559.9 499.2 L560.2 501.5 L560.5 503.6 L560.7 505.7 L561 507.5 L561.3 509.1 L561.6 510.6 L561.9 511.9 L562.2 513 L562.4 514.1 L562.6 515 L562.7 515.8 L562.8 516.5 L562.9 517.1 L562.9 517.5 L563 517.9 L563 518.2 L600.2 518.2 L595.7 441.8Z" fill="#c9c9c9" stroke="#7d7d7d" stroke-width=".9"/>
<clipPath id="ht228"><rect x="500" y="438.8" width="140" height="16.8"/></clipPath>
<path d="M590 441.8 L588.6 442 L586.8 442.3 L584.5 442.6 L582.1 442.9 L579.8 443.4 L577.7 444 L575.8 444.7 L573.8 445.4 L572 446.3 L570.2 447.2 L568.5 448.3 L566.9 449.4 L565.5 450.6 L564.1 452 L562.9 453.4 L561.8 454.9 L560.8 456.5 L559.9 458 L559.2 459.5 L558.6 461 L558.1 462.6 L557.7 464.2 L557.4 465.9 L557.2 467.7 L557.1 469.7 L557.1 471.7 L557.2 473.9 L557.4 476.1 L557.6 478.3 L557.8 480.6 L558 482.9 L558.3 485.2 L558.5 487.6 L558.8 490 L559.1 492.3 L559.4 494.6 L559.7 496.9 L559.9 499.2 L560.2 501.5 L560.5 503.6 L560.7 505.7 L561 507.5 L561.3 509.1 L561.6 510.6 L561.9 511.9 L562.2 513 L562.4 514.1 L562.6 515 L562.7 515.8 L562.8 516.5 L562.9 517.1 L562.9 517.5 L563 517.9 L563 518.2 L600.2 518.2 L595.7 441.8Z" fill="url(#mesh)" clip-path="url(#ht228)"/>
<path d="M590.6 452.6 L589.5 452.8 L588.1 453.1 L586.4 453.4 L584.5 453.8 L582.6 454.2 L580.9 454.8 L579.2 455.5 L577.5 456.2 L575.8 457 L574.2 458 L572.6 459 L571.2 460.1 L569.9 461.3 L568.7 462.6 L567.5 464 L566.5 465.5 L565.6 467.1 L564.8 468.8 L564.1 470.6 L563.6 472.4 L563.2 474.4 L562.9 476.4 L562.7 478.5 L562.6 480.6 L562.6 482.8 L562.9 485.1 L563.2 487.5 L563.5 489.9 L563.9 492.3 L564.2 494.6 L564.5 496.9 L564.8 499.2 L565.1 501.5 L565.3 503.6 L565.6 505.7 L565.8 507.5 L566 509.1 L566.1 510.5 L566.2 511.8 L566.3 513 L566.3 514 L566.4 515 L566.5 515.9 L566.6 516.6 L566.6 517.3 L566.7 517.8 L566.8 518.3 L566.8 518.6 L600.2 518.6 L596.2 452.6Z" fill="#d4d4d4" stroke="#757575" stroke-width=".9"/>
<clipPath id="c231"><path d="M590.6 452.6 L589.5 452.8 L588.1 453.1 L586.4 453.4 L584.5 453.8 L582.6 454.2 L580.9 454.8 L579.2 455.5 L577.5 456.2 L575.8 457 L574.2 458 L572.6 459 L571.2 460.1 L569.9 461.3 L568.7 462.6 L567.5 464 L566.5 465.5 L565.6 467.1 L564.8 468.8 L564.1 470.6 L563.6 472.4 L563.2 474.4 L562.9 476.4 L562.7 478.5 L562.6 480.6 L562.6 482.8 L562.9 485.1 L563.2 487.5 L563.5 489.9 L563.9 492.3 L564.2 494.6 L564.5 496.9 L564.8 499.2 L565.1 501.5 L565.3 503.6 L565.6 505.7 L565.8 507.5 L566 509.1 L566.1 510.5 L566.2 511.8 L566.3 513 L566.3 514 L566.4 515 L566.5 515.9 L566.6 516.6 L566.6 517.3 L566.7 517.8 L566.8 518.3 L566.8 518.6 L600.2 518.6 L596.2 452.6Z"/></clipPath>
<g clip-path="url(#c231)" stroke="#6a6a6a" stroke-width=".85" fill="none">
<path d="M594 517L589.5 452.8"/>
<path d="M594 517L577.5 456.2"/>
<path d="M591 517L575.7 456.2"/>
<path d="M594 517L571.2 460.1"/>
<path d="M594 517L565.6 467.1"/>
<path d="M594 517L562.9 476.4"/>
<path d="M591 517L561.1 476.4"/>
<path d="M594 517L563.5 489.9"/>
<path d="M594 517L565.6 505.7"/>
<path d="M594 517L566.2 511.8"/>
<path d="M591 517L564.4 511.8"/>
<path d="M594 517L566.6 517.3"/>
<path d="M592.9 496.4 L592.6 496.5 L592.1 496.5 L591.6 496.6 L591 496.8 L590.4 496.9 L589.8 497.1 L589.3 497.3 L588.7 497.5 L588.2 497.8 L587.7 498.1 L587.2 498.4 L586.7 498.8 L586.3 499.2 L585.9 499.6 L585.5 500.1 L585.2 500.5 L584.9 501 L584.7 501.6 L584.4 502.1 L584.3 502.7 L584.1 503.4 L584 504 L584 504.7 L584 505.4 L584 506.1 L584 506.8 L584.1 507.6 L584.2 508.3 L584.4 509.1 L584.5 509.8 L584.6 510.6 L584.6 511.3 L584.7 512 L584.8 512.7 L584.9 513.4 L585 514 L585 514.5 L585.1 514.9 L585.1 515.3 L585.1 515.7 L585.1 516.1 L585.2 516.4 L585.2 516.6 L585.2 516.9 L585.2 517.1 L585.3 517.3 L585.3 517.4 L585.3 517.5"/>
<path d="M592.3 484.8 L591.8 484.9 L591 485 L590.2 485.2 L589.2 485.4 L588.3 485.6 L587.5 485.9 L586.6 486.2 L585.8 486.6 L584.9 487 L584.1 487.5 L583.3 488 L582.6 488.6 L581.9 489.2 L581.3 489.8 L580.8 490.5 L580.2 491.3 L579.8 492.1 L579.4 492.9 L579.1 493.8 L578.8 494.7 L578.6 495.7 L578.4 496.7 L578.3 497.7 L578.3 498.8 L578.3 499.9 L578.4 501.1 L578.6 502.3 L578.8 503.5 L578.9 504.7 L579.1 505.8 L579.2 506.9 L579.4 508.1 L579.5 509.2 L579.7 510.3 L579.8 511.3 L579.9 512.2 L580 513.1 L580 513.8 L580.1 514.4 L580.1 515 L580.2 515.5 L580.2 516 L580.2 516.4 L580.3 516.8 L580.3 517.1 L580.4 517.4 L580.4 517.6 L580.4 517.8"/>
<path d="M591.7 473.2 L591 473.3 L590 473.5 L588.8 473.7 L587.5 474 L586.3 474.3 L585.1 474.7 L584 475.2 L582.8 475.7 L581.7 476.2 L580.5 476.9 L579.5 477.5 L578.5 478.3 L577.6 479.1 L576.8 480 L576 481 L575.3 482 L574.7 483.1 L574.1 484.2 L573.7 485.4 L573.3 486.7 L573.1 488 L572.8 489.4 L572.7 490.8 L572.6 492.2 L572.7 493.8 L572.8 495.3 L573 497 L573.3 498.6 L573.5 500.2 L573.7 501.8 L573.9 503.3 L574.1 504.9 L574.3 506.4 L574.5 507.9 L574.7 509.3 L574.8 510.5 L574.9 511.6 L575 512.6 L575.1 513.5 L575.1 514.3 L575.2 515 L575.2 515.6 L575.3 516.2 L575.3 516.7 L575.4 517.2 L575.4 517.6 L575.5 517.9 L575.5 518.1"/>
<path d="M591.1 462.9 L590.3 463.1 L589 463.3 L587.6 463.5 L586 463.9 L584.4 464.3 L583 464.8 L581.6 465.3 L580.2 465.9 L578.7 466.6 L577.4 467.4 L576 468.3 L574.8 469.2 L573.8 470.2 L572.7 471.3 L571.8 472.5 L570.9 473.8 L570.1 475.1 L569.5 476.5 L568.9 478 L568.5 479.6 L568.1 481.2 L567.9 482.9 L567.7 484.6 L567.6 486.4 L567.7 488.3 L567.8 490.2 L568.1 492.2 L568.4 494.3 L568.7 496.3 L569 498.2 L569.2 500.1 L569.4 502 L569.7 503.9 L569.9 505.8 L570.1 507.5 L570.3 509 L570.4 510.4 L570.5 511.6 L570.6 512.7 L570.7 513.6 L570.8 514.5 L570.8 515.3 L570.9 516 L571 516.7 L571 517.2 L571.1 517.7 L571.1 518.1 L571.2 518.3"/>
<path d="M574.5 475.2L565.6 505.7"/>
<path d="M589.2 476.8L563.9 492.3"/>
<path d="M576.1 481.2L565.8 507.5"/>
<path d="M577.9 479.7L566 509.1"/>
</g>
<path d="M422.2 543.3 L424.6 543.3 L427.9 543.2 L431.9 543.1 L436 543.2 L439.9 543.5 L443.2 544.1 L446 545 L448.5 546.2 L450.8 547.5 L453 549.2 L455 551 L456.8 553.2 L458.5 555.7 L460.1 558.7 L461.6 561.8 L462.8 565.2 L463.7 568.5 L464.3 571.8 L464.5 575.1 L464.4 578.4 L464.1 581.8 L463.5 585.1 L462.7 588.4 L461.8 591.6 L460.7 594.7 L459.2 597.7 L457.6 600.6 L455.9 603.5 L454.4 606.3 L453.1 608.9 L452 611.4 L451 613.8 L450.2 616.2 L449.4 618.4 L448.8 620.4 L448.2 622.3 L447.8 624.1 L447.5 625.8 L447.3 627.3 L447.2 628.6 L447.1 629.8 L447 630.6 L396.4 630.6 L416.4 543.3Z" fill="#bfbebd" stroke="#7d7d7d" stroke-width=".9"/>
<path d="M418.5 552 L420.4 552.6 L423.1 553.3 L426.2 554.2 L429.6 555.4 L432.9 556.7 L435.8 558.2 L438.5 560.1 L441.3 562.2 L444 564.6 L446.6 567.1 L448.8 569.5 L450.7 571.8 L452.2 573.9 L453.4 575.8 L454.4 577.8 L455.1 579.7 L455.5 581.9 L455.6 584.2 L455.4 586.9 L454.7 589.8 L453.8 592.9 L452.7 595.9 L451.6 598.8 L450.7 601.5 L449.9 603.9 L449 606.1 L448.1 608.2 L447.3 610.2 L446.5 612.1 L445.7 613.9 L445 615.7 L444.3 617.3 L443.6 618.9 L443 620.4 L442.4 621.9 L442 623.3 L441.7 624.7 L441.4 626.1 L441.3 627.5 L441.2 628.7 L441.1 629.7 L441 630.5 L396.5 630.5 L414.4 552Z" fill="#b1b0af" stroke="#757575" stroke-width=".9"/>
<clipPath id="c256"><path d="M418.5 552 L420.4 552.6 L423.1 553.3 L426.2 554.2 L429.6 555.4 L432.9 556.7 L435.8 558.2 L438.5 560.1 L441.3 562.2 L444 564.6 L446.6 567.1 L448.8 569.5 L450.7 571.8 L452.2 573.9 L453.4 575.8 L454.4 577.8 L455.1 579.7 L455.5 581.9 L455.6 584.2 L455.4 586.9 L454.7 589.8 L453.8 592.9 L452.7 595.9 L451.6 598.8 L450.7 601.5 L449.9 603.9 L449 606.1 L448.1 608.2 L447.3 610.2 L446.5 612.1 L445.7 613.9 L445 615.7 L444.3 617.3 L443.6 618.9 L443 620.4 L442.4 621.9 L442 623.3 L441.7 624.7 L441.4 626.1 L441.3 627.5 L441.2 628.7 L441.1 629.7 L441 630.5 L396.5 630.5 L414.4 552Z"/></clipPath>
<g clip-path="url(#c256)" stroke="#6a6a6a" stroke-width=".85" fill="none">
<path d="M403.6 626L423.1 553.3"/>
<path d="M403.6 626L435.8 558.2"/>
<path d="M406.6 626L437.6 558.2"/>
<path d="M403.6 626L444 564.6"/>
<path d="M403.6 626L453.4 575.8"/>
<path d="M403.6 626L455.6 584.2"/>
<path d="M406.6 626L457.4 584.2"/>
<path d="M403.6 626L451.6 598.8"/>
<path d="M403.6 626L448.1 608.2"/>
<path d="M403.6 626L445 615.7"/>
<path d="M406.6 626L446.8 615.7"/>
<path d="M403.6 626L442 623.3"/>
<path d="M403.6 626L441.3 627.5"/>
<path d="M408.4 602.3 L409 602.5 L409.8 602.7 L410.8 603 L411.9 603.4 L413 603.8 L413.9 604.3 L414.8 604.9 L415.7 605.6 L416.5 606.4 L417.3 607.1 L418.1 607.9 L418.7 608.7 L419.2 609.3 L419.5 609.9 L419.9 610.6 L420.1 611.2 L420.2 611.9 L420.2 612.6 L420.2 613.5 L420 614.4 L419.7 615.4 L419.3 616.4 L419 617.3 L418.7 618.2 L418.4 618.9 L418.1 619.6 L417.8 620.3 L417.6 620.9 L417.3 621.5 L417.1 622.1 L416.8 622.7 L416.6 623.2 L416.4 623.7 L416.2 624.2 L416 624.7 L415.9 625.1 L415.8 625.6 L415.7 626 L415.7 626.5 L415.6 626.9 L415.6 627.2 L415.6 627.4"/>
<path d="M411.1 589 L412 589.3 L413.3 589.7 L414.9 590.1 L416.6 590.7 L418.2 591.3 L419.7 592.1 L421.1 593 L422.5 594.1 L423.8 595.3 L425.1 596.5 L426.2 597.8 L427.1 598.9 L427.9 599.9 L428.5 600.9 L429 601.9 L429.3 602.9 L429.5 603.9 L429.6 605.1 L429.5 606.4 L429.1 607.9 L428.7 609.4 L428.2 611 L427.6 612.4 L427.1 613.8 L426.7 614.9 L426.3 616.1 L425.9 617.1 L425.4 618.1 L425 619 L424.6 620 L424.3 620.8 L423.9 621.7 L423.6 622.5 L423.3 623.2 L423 623.9 L422.8 624.6 L422.6 625.4 L422.5 626.1 L422.4 626.7 L422.4 627.4 L422.3 627.9 L422.3 628.2"/>
<path d="M413.7 575.7 L415 576.1 L416.8 576.6 L419 577.2 L421.3 578 L423.5 578.9 L425.5 579.9 L427.4 581.2 L429.2 582.6 L431.1 584.3 L432.8 585.9 L434.4 587.6 L435.6 589.1 L436.7 590.6 L437.5 591.9 L438.1 593.2 L438.6 594.5 L438.9 596 L439 597.6 L438.8 599.4 L438.3 601.4 L437.7 603.5 L437 605.5 L436.3 607.5 L435.6 609.3 L435.1 611 L434.5 612.5 L433.9 613.9 L433.3 615.2 L432.7 616.5 L432.2 617.8 L431.7 619 L431.3 620.1 L430.8 621.2 L430.4 622.2 L430 623.2 L429.7 624.2 L429.5 625.1 L429.3 626.1 L429.2 627 L429.1 627.8 L429.1 628.5 L429 629.1"/>
<path d="M416.1 563.8 L417.7 564.3 L420 565 L422.6 565.7 L425.4 566.7 L428.2 567.8 L430.6 569 L432.9 570.6 L435.3 572.4 L437.6 574.4 L439.7 576.5 L441.6 578.6 L443.2 580.5 L444.4 582.2 L445.5 583.9 L446.3 585.5 L446.8 587.1 L447.2 588.9 L447.3 590.9 L447.1 593.1 L446.5 595.6 L445.7 598.2 L444.8 600.7 L444 603.2 L443.2 605.4 L442.5 607.4 L441.7 609.3 L441 611 L440.3 612.7 L439.6 614.3 L439 615.8 L438.4 617.3 L437.8 618.7 L437.2 620.1 L436.7 621.3 L436.2 622.6 L435.9 623.7 L435.6 624.9 L435.4 626.1 L435.2 627.2 L435.1 628.3 L435.1 629.1 L435 629.8"/>
<path d="M428.3 588.5L441.7 624.7"/>
<path d="M438.7 577.8L449.9 603.9"/>
<path d="M448.5 580.8L443 620.4"/>
<path d="M431.1 574L442 623.3"/>
</g>
<path d="M596.7 555 L595.2 555.3 L593.1 555.7 L590.7 556.1 L588 556.7 L585.5 557.4 L583.1 558.2 L580.9 559.1 L578.7 560.2 L576.5 561.4 L574.4 562.7 L572.5 564.1 L570.7 565.6 L569.1 567.2 L567.6 568.8 L566.3 570.6 L565.1 572.5 L564.1 574.5 L563.3 576.8 L562.7 579.3 L562.3 582.1 L562.1 585.1 L562 588.1 L562 591.1 L562.1 594.1 L562.3 597 L562.7 600 L563.1 602.9 L563.6 605.8 L564.1 608.7 L564.5 611.4 L564.8 614.1 L565 616.7 L565.3 619.3 L565.5 621.7 L565.6 624 L565.8 626 L565.9 627.8 L566 629.5 L566.1 631 L566.2 632.3 L566.3 633.4 L566.3 634.2 L606.7 634.2 L602.4 555Z" fill="#c6c6c6" stroke="#7d7d7d" stroke-width=".9"/>
<clipPath id="ht281"><rect x="500" y="552" width="140" height="17.4"/></clipPath>
<path d="M596.7 555 L595.2 555.3 L593.1 555.7 L590.7 556.1 L588 556.7 L585.5 557.4 L583.1 558.2 L580.9 559.1 L578.7 560.2 L576.5 561.4 L574.4 562.7 L572.5 564.1 L570.7 565.6 L569.1 567.2 L567.6 568.8 L566.3 570.6 L565.1 572.5 L564.1 574.5 L563.3 576.8 L562.7 579.3 L562.3 582.1 L562.1 585.1 L562 588.1 L562 591.1 L562.1 594.1 L562.3 597 L562.7 600 L563.1 602.9 L563.6 605.8 L564.1 608.7 L564.5 611.4 L564.8 614.1 L565 616.7 L565.3 619.3 L565.5 621.7 L565.6 624 L565.8 626 L565.9 627.8 L566 629.5 L566.1 631 L566.2 632.3 L566.3 633.4 L566.3 634.2 L606.7 634.2 L602.4 555Z" fill="url(#mesh)" clip-path="url(#ht281)"/>
<path d="M597.5 566.4 L596.2 566.7 L594.3 567 L592.2 567.4 L589.9 567.9 L587.6 568.5 L585.6 569.3 L583.8 570.2 L582 571.3 L580.3 572.5 L578.7 573.8 L577.1 575.2 L575.7 576.8 L574.4 578.5 L573.2 580.4 L572.1 582.5 L571.1 584.6 L570.2 586.8 L569.5 589.1 L569 591.4 L568.6 593.9 L568.4 596.4 L568.2 598.9 L568.2 601.5 L568.3 604 L568.5 606.5 L568.8 609.2 L569.3 611.8 L569.8 614.3 L570.3 616.7 L570.7 618.8 L571.1 620.6 L571.5 622.2 L571.8 623.5 L572.2 624.8 L572.5 626 L572.7 627.3 L572.9 628.6 L573 630 L573.1 631.3 L573.1 632.5 L573.2 633.5 L573.2 634.2 L606.7 634.2 L603 566.4Z" fill="#d0d0d0" stroke="#757575" stroke-width=".9"/>
<clipPath id="c284"><path d="M597.5 566.4 L596.2 566.7 L594.3 567 L592.2 567.4 L589.9 567.9 L587.6 568.5 L585.6 569.3 L583.8 570.2 L582 571.3 L580.3 572.5 L578.7 573.8 L577.1 575.2 L575.7 576.8 L574.4 578.5 L573.2 580.4 L572.1 582.5 L571.1 584.6 L570.2 586.8 L569.5 589.1 L569 591.4 L568.6 593.9 L568.4 596.4 L568.2 598.9 L568.2 601.5 L568.3 604 L568.5 606.5 L568.8 609.2 L569.3 611.8 L569.8 614.3 L570.3 616.7 L570.7 618.8 L571.1 620.6 L571.5 622.2 L571.8 623.5 L572.2 624.8 L572.5 626 L572.7 627.3 L572.9 628.6 L573 630 L573.1 631.3 L573.1 632.5 L573.2 633.5 L573.2 634.2 L606.7 634.2 L603 566.4Z"/></clipPath>
<g clip-path="url(#c284)" stroke="#6a6a6a" stroke-width=".85" fill="none">
<path d="M600.5 630L594.3 567"/>
<path d="M600.5 630L585.6 569.3"/>
<path d="M597.5 630L583.8 569.3"/>
<path d="M600.5 630L577.1 575.2"/>
<path d="M600.5 630L572.1 582.5"/>
<path d="M600.5 630L569.5 589.1"/>
<path d="M597.5 630L567.7 589.1"/>
<path d="M600.5 630L568.2 601.5"/>
<path d="M600.5 630L568.8 609.2"/>
<path d="M600.5 630L571.1 620.6"/>
<path d="M597.5 630L569.3 620.6"/>
<path d="M600.5 630L572.7 627.3"/>
<path d="M600.5 630L573.1 632.5"/>
<path d="M599.5 609.6 L599.1 609.7 L598.5 609.8 L597.8 610 L597.1 610.1 L596.4 610.3 L595.7 610.6 L595.2 610.9 L594.6 611.2 L594 611.6 L593.5 612 L593 612.5 L592.6 613 L592.1 613.5 L591.8 614.1 L591.4 614.8 L591.1 615.5 L590.8 616.2 L590.6 616.9 L590.4 617.7 L590.3 618.4 L590.2 619.2 L590.2 620.1 L590.2 620.9 L590.2 621.7 L590.3 622.5 L590.4 623.3 L590.5 624.2 L590.7 625 L590.8 625.7 L591 626.4 L591.1 627 L591.2 627.5 L591.3 627.9 L591.4 628.3 L591.5 628.7 L591.6 629.1 L591.7 629.6 L591.7 630 L591.7 630.4 L591.7 630.8 L591.8 631.1 L591.8 631.3"/>
<path d="M599 598.2 L598.3 598.3 L597.4 598.5 L596.3 598.7 L595.2 598.9 L594.1 599.3 L593 599.6 L592.1 600.1 L591.3 600.6 L590.4 601.2 L589.6 601.9 L588.8 602.6 L588.1 603.4 L587.4 604.3 L586.8 605.2 L586.3 606.2 L585.8 607.3 L585.4 608.4 L585 609.5 L584.7 610.7 L584.5 611.9 L584.4 613.2 L584.4 614.5 L584.4 615.7 L584.4 617 L584.5 618.3 L584.7 619.6 L584.9 620.9 L585.1 622.2 L585.4 623.3 L585.6 624.4 L585.8 625.3 L586 626.1 L586.2 626.8 L586.3 627.4 L586.5 628 L586.6 628.6 L586.7 629.3 L586.7 630 L586.8 630.6 L586.8 631.2 L586.8 631.7 L586.9 632.1"/>
<path d="M598.5 586.8 L597.6 586.9 L596.3 587.1 L594.8 587.4 L593.3 587.8 L591.7 588.2 L590.4 588.7 L589.1 589.4 L587.9 590.1 L586.8 590.9 L585.6 591.8 L584.6 592.7 L583.6 593.8 L582.7 595 L581.9 596.3 L581.2 597.7 L580.5 599.1 L579.9 600.7 L579.4 602.2 L579.1 603.8 L578.8 605.4 L578.6 607.1 L578.6 608.9 L578.6 610.6 L578.6 612.3 L578.7 614.1 L579 615.8 L579.3 617.6 L579.6 619.3 L580 621 L580.2 622.4 L580.5 623.6 L580.7 624.7 L581 625.6 L581.2 626.5 L581.4 627.3 L581.6 628.2 L581.7 629.1 L581.8 630 L581.9 630.9 L581.9 631.7 L581.9 632.4 L581.9 632.9"/>
<path d="M598 576.6 L596.9 576.8 L595.3 577.1 L593.5 577.4 L591.6 577.8 L589.7 578.4 L588 579 L586.5 579.8 L585 580.7 L583.5 581.7 L582.1 582.8 L580.9 584 L579.7 585.3 L578.6 586.8 L577.5 588.4 L576.6 590.1 L575.8 591.9 L575 593.7 L574.5 595.6 L574 597.6 L573.7 599.7 L573.5 601.8 L573.4 603.9 L573.4 606.1 L573.5 608.2 L573.6 610.3 L573.9 612.5 L574.3 614.7 L574.7 616.8 L575.1 618.8 L575.5 620.6 L575.8 622.1 L576.1 623.4 L576.4 624.6 L576.7 625.6 L576.9 626.7 L577.1 627.7 L577.3 628.8 L577.4 630 L577.5 631.1 L577.5 632.1 L577.5 632.9 L577.6 633.5"/>
<path d="M580.5 596.5L570.3 616.7"/>
<path d="M581.3 592.2L568.5 606.5"/>
<path d="M594.4 594.4L569.3 611.8"/>
<path d="M582 599.2L569.3 611.8"/>
</g>
<path d="M397.4 658.5 L399.3 658.8 L402 659.2 L405.2 659.7 L408.5 660.3 L411.8 661.1 L414.8 662.2 L417.5 663.6 L420.2 665.2 L422.8 667.1 L425.3 669 L427.6 671.1 L429.6 673.3 L431.4 675.5 L432.9 677.9 L434.3 680.4 L435.4 682.9 L436.3 685.5 L437 688.2 L437.4 691 L437.6 693.8 L437.5 696.8 L437.2 699.7 L436.8 702.6 L436.2 705.5 L435.4 708.3 L434.3 711.2 L433.1 714.1 L431.8 716.9 L430.5 719.5 L429.4 722 L428.3 724.3 L427.3 726.5 L426.3 728.6 L425.3 730.5 L424.4 732.3 L423.6 734 L422.9 735.5 L422.3 736.9 L421.8 738.1 L421.4 739.2 L421 740.4 L420.7 741.6 L420.4 743 L420.2 744.4 L420.1 745.9 L420 747.2 L419.9 748.4 L419.8 749.2 L372 749.2 L389.5 658.5Z" fill="#bfbebd" stroke="#7d7d7d" stroke-width=".9"/>
<path d="M393.7 668.4 L395.5 668.9 L398 669.5 L401 670.2 L404.1 671.1 L407.1 672.1 L409.8 673.3 L412.2 674.6 L414.4 676 L416.6 677.6 L418.7 679.3 L420.5 681.2 L422.2 683.2 L423.7 685.4 L425 687.8 L426.2 690.4 L427.2 693 L427.9 695.6 L428.4 698.1 L428.6 700.5 L428.5 702.8 L428.1 705.1 L427.7 707.4 L427.1 709.7 L426.5 712 L425.8 714.3 L425.1 716.7 L424.2 719 L423.3 721.4 L422.4 723.8 L421.5 726.2 L420.6 728.8 L419.7 731.5 L418.7 734.3 L417.8 737 L417 739.5 L416.4 741.6 L416 743.4 L415.7 745 L415.6 746.4 L415.5 747.5 L415.5 748.5 L415.4 749.2 L372 749.2 L387.3 668.4Z" fill="#b1b0af" stroke="#757575" stroke-width=".9"/>
<clipPath id="c310"><path d="M393.7 668.4 L395.5 668.9 L398 669.5 L401 670.2 L404.1 671.1 L407.1 672.1 L409.8 673.3 L412.2 674.6 L414.4 676 L416.6 677.6 L418.7 679.3 L420.5 681.2 L422.2 683.2 L423.7 685.4 L425 687.8 L426.2 690.4 L427.2 693 L427.9 695.6 L428.4 698.1 L428.6 700.5 L428.5 702.8 L428.1 705.1 L427.7 707.4 L427.1 709.7 L426.5 712 L425.8 714.3 L425.1 716.7 L424.2 719 L423.3 721.4 L422.4 723.8 L421.5 726.2 L420.6 728.8 L419.7 731.5 L418.7 734.3 L417.8 737 L417 739.5 L416.4 741.6 L416 743.4 L415.7 745 L415.6 746.4 L415.5 747.5 L415.5 748.5 L415.4 749.2 L372 749.2 L387.3 668.4Z"/></clipPath>
<g clip-path="url(#c310)" stroke="#6a6a6a" stroke-width=".85" fill="none">
<path d="M378.9 744.4L395.5 668.9"/>
<path d="M378.9 744.4L409.8 673.3"/>
<path d="M381.9 744.4L411.6 673.3"/>
<path d="M378.9 744.4L414.4 676"/>
<path d="M378.9 744.4L423.7 685.4"/>
<path d="M378.9 744.4L427.9 695.6"/>
<path d="M381.9 744.4L429.7 695.6"/>
<path d="M378.9 744.4L428.1 705.1"/>
<path d="M378.9 744.4L425.8 714.3"/>
<path d="M378.9 744.4L422.4 723.8"/>
<path d="M381.9 744.4L424.2 723.8"/>
<path d="M378.9 744.4L419.7 731.5"/>
<path d="M378.9 744.4L416.4 741.6"/>
<path d="M378.9 744.4L415.6 746.4"/>
<path d="M381.9 744.4L417.4 746.4"/>
<path d="M383.6 720.1 L384.2 720.2 L385 720.4 L386 720.7 L387 720.9 L387.9 721.3 L388.8 721.6 L389.5 722.1 L390.3 722.5 L391 723 L391.6 723.6 L392.2 724.2 L392.8 724.8 L393.2 725.5 L393.7 726.3 L394 727.1 L394.3 728 L394.6 728.8 L394.7 729.6 L394.8 730.3 L394.8 731.1 L394.7 731.8 L394.5 732.6 L394.3 733.3 L394.1 734 L393.9 734.8 L393.7 735.5 L393.4 736.3 L393.1 737 L392.8 737.8 L392.5 738.6 L392.2 739.4 L391.9 740.3 L391.6 741.2 L391.3 742 L391.1 742.8 L390.9 743.5 L390.8 744.1 L390.7 744.6 L390.6 745 L390.6 745.4 L390.6 745.7 L390.6 745.9"/>
<path d="M386.3 706.4 L387.2 706.6 L388.5 706.9 L389.9 707.3 L391.5 707.8 L393 708.3 L394.4 708.8 L395.5 709.5 L396.7 710.2 L397.8 711 L398.8 711.9 L399.7 712.8 L400.5 713.8 L401.3 714.9 L402 716.1 L402.5 717.4 L403 718.7 L403.4 720 L403.6 721.2 L403.7 722.4 L403.7 723.6 L403.5 724.7 L403.3 725.9 L403 727 L402.7 728.2 L402.4 729.4 L402 730.5 L401.5 731.7 L401.1 732.9 L400.6 734.1 L400.2 735.3 L399.8 736.6 L399.3 738 L398.8 739.4 L398.4 740.7 L398 741.9 L397.6 743 L397.4 743.9 L397.3 744.7 L397.2 745.4 L397.2 746 L397.2 746.4 L397.1 746.8"/>
<path d="M389 692.7 L390.2 693 L391.9 693.5 L393.9 694 L396 694.6 L398.1 695.3 L399.9 696.1 L401.5 696.9 L403.1 697.9 L404.5 699 L405.9 700.2 L407.2 701.4 L408.3 702.8 L409.4 704.3 L410.3 705.9 L411.1 707.7 L411.7 709.5 L412.2 711.2 L412.6 712.9 L412.7 714.5 L412.6 716.1 L412.4 717.7 L412.1 719.2 L411.7 720.8 L411.3 722.4 L410.8 724 L410.3 725.5 L409.7 727.1 L409.1 728.7 L408.5 730.4 L407.9 732 L407.3 733.8 L406.6 735.7 L406 737.5 L405.4 739.4 L404.8 741 L404.4 742.5 L404.1 743.7 L403.9 744.8 L403.8 745.7 L403.8 746.5 L403.8 747.2 L403.7 747.7"/>
<path d="M391.3 680.6 L392.8 681 L395 681.5 L397.4 682.1 L400.1 682.8 L402.6 683.7 L404.9 684.7 L406.8 685.8 L408.8 687 L410.6 688.3 L412.3 689.8 L413.9 691.3 L415.3 693 L416.5 694.8 L417.6 696.9 L418.6 699 L419.4 701.2 L420.1 703.4 L420.5 705.5 L420.6 707.5 L420.5 709.5 L420.3 711.4 L419.9 713.3 L419.4 715.2 L418.9 717.2 L418.3 719.1 L417.7 721.1 L417 723.1 L416.2 725.1 L415.4 727.1 L414.7 729.1 L413.9 731.3 L413.1 733.6 L412.3 735.9 L411.6 738.2 L410.9 740.3 L410.4 742 L410.1 743.6 L409.8 744.9 L409.7 746 L409.7 747 L409.6 747.8 L409.6 748.4"/>
<path d="M408.4 713L415.5 747.5"/>
<path d="M397.1 697.9L423.3 721.4"/>
<path d="M404.9 701.8L417.8 737"/>
<path d="M392.2 692.1L420.6 728.8"/>
</g>
<path d="M602.9 673.3 L601.3 673.8 L599 674.4 L596.3 675.2 L593.4 676.1 L590.6 677.1 L588.1 678.3 L585.8 679.6 L583.6 681.1 L581.4 682.8 L579.4 684.5 L577.4 686.4 L575.7 688.2 L574.1 690.1 L572.7 692 L571.4 694 L570.2 696.1 L569.2 698.3 L568.3 700.5 L567.6 702.8 L567.1 705.3 L566.8 707.8 L566.5 710.4 L566.4 712.9 L566.3 715.4 L566.3 717.9 L566.4 720.3 L566.6 722.7 L566.8 725.2 L567.1 727.6 L567.5 730 L568 732.5 L568.5 735.1 L569.2 737.7 L569.8 740.2 L570.4 742.5 L570.8 744.5 L571.1 746.3 L571.2 747.9 L571.3 749.3 L571.3 750.5 L571.3 751.4 L571.3 752.2 L612.1 752.2 L608.9 673.3Z" fill="#bababa" stroke="#7d7d7d" stroke-width=".9"/>
<clipPath id="ht337"><rect x="500" y="670.3" width="140" height="17.1"/></clipPath>
<path d="M602.9 673.3 L601.3 673.8 L599 674.4 L596.3 675.2 L593.4 676.1 L590.6 677.1 L588.1 678.3 L585.8 679.6 L583.6 681.1 L581.4 682.8 L579.4 684.5 L577.4 686.4 L575.7 688.2 L574.1 690.1 L572.7 692 L571.4 694 L570.2 696.1 L569.2 698.3 L568.3 700.5 L567.6 702.8 L567.1 705.3 L566.8 707.8 L566.5 710.4 L566.4 712.9 L566.3 715.4 L566.3 717.9 L566.4 720.3 L566.6 722.7 L566.8 725.2 L567.1 727.6 L567.5 730 L568 732.5 L568.5 735.1 L569.2 737.7 L569.8 740.2 L570.4 742.5 L570.8 744.5 L571.1 746.3 L571.2 747.9 L571.3 749.3 L571.3 750.5 L571.3 751.4 L571.3 752.2 L612.1 752.2 L608.9 673.3Z" fill="url(#mesh)" clip-path="url(#ht337)"/>
<path d="M603.4 684.4 L602 684.7 L600 685.2 L597.6 685.7 L595.1 686.3 L592.7 687.2 L590.5 688.2 L588.5 689.5 L586.4 691 L584.4 692.6 L582.6 694.4 L580.9 696.2 L579.4 698.1 L578.2 700 L577.2 702.1 L576.3 704.2 L575.6 706.3 L575 708.5 L574.5 710.5 L574.1 712.5 L573.8 714.4 L573.6 716.3 L573.5 718.2 L573.5 720.1 L573.5 722 L573.6 723.9 L573.8 725.7 L574.1 727.5 L574.5 729.3 L574.8 731.1 L575.2 733 L575.6 734.9 L576.1 736.9 L576.7 739 L577.2 740.9 L577.6 742.8 L578 744.5 L578.2 746.1 L578.4 747.6 L578.5 749.1 L578.5 750.3 L578.6 751.4 L578.6 752.2 L612.1 752.2 L609.7 684.4Z" fill="#c6c6c6" stroke="#757575" stroke-width=".9"/>
<clipPath id="c340"><path d="M603.4 684.4 L602 684.7 L600 685.2 L597.6 685.7 L595.1 686.3 L592.7 687.2 L590.5 688.2 L588.5 689.5 L586.4 691 L584.4 692.6 L582.6 694.4 L580.9 696.2 L579.4 698.1 L578.2 700 L577.2 702.1 L576.3 704.2 L575.6 706.3 L575 708.5 L574.5 710.5 L574.1 712.5 L573.8 714.4 L573.6 716.3 L573.5 718.2 L573.5 720.1 L573.5 722 L573.6 723.9 L573.8 725.7 L574.1 727.5 L574.5 729.3 L574.8 731.1 L575.2 733 L575.6 734.9 L576.1 736.9 L576.7 739 L577.2 740.9 L577.6 742.8 L578 744.5 L578.2 746.1 L578.4 747.6 L578.5 749.1 L578.5 750.3 L578.6 751.4 L578.6 752.2 L612.1 752.2 L609.7 684.4Z"/></clipPath>
<g clip-path="url(#c340)" stroke="#6a6a6a" stroke-width=".85" fill="none">
<path d="M605.8 746.4L600 685.2"/>
<path d="M605.8 746.4L590.5 688.2"/>
<path d="M602.8 746.4L588.7 688.2"/>
<path d="M605.8 746.4L584.4 692.6"/>
<path d="M605.8 746.4L578.2 700"/>
<path d="M605.8 746.4L575 708.5"/>
<path d="M602.8 746.4L573.2 708.5"/>
<path d="M605.8 746.4L573.6 716.3"/>
<path d="M605.8 746.4L573.5 720.1"/>
<path d="M605.8 746.4L574.8 731.1"/>
<path d="M602.8 746.4L573 731.1"/>
<path d="M605.8 746.4L576.1 736.9"/>
<path d="M605.8 746.4L578 744.5"/>
<path d="M605.8 746.4L578.5 750.3"/>
<path d="M602.8 746.4L576.7 750.3"/>
<path d="M605 726.6 L604.6 726.7 L603.9 726.8 L603.2 727 L602.4 727.2 L601.6 727.4 L600.9 727.8 L600.3 728.2 L599.6 728.7 L599 729.2 L598.4 729.8 L597.8 730.3 L597.4 730.9 L597 731.6 L596.6 732.2 L596.4 732.9 L596.1 733.6 L596 734.3 L595.8 734.9 L595.6 735.5 L595.6 736.2 L595.5 736.8 L595.5 737.4 L595.5 738 L595.5 738.6 L595.5 739.2 L595.6 739.8 L595.7 740.4 L595.8 740.9 L595.9 741.5 L596 742.1 L596.1 742.7 L596.3 743.4 L596.5 744 L596.6 744.6 L596.8 745.2 L596.9 745.8 L597 746.3 L597 746.8 L597.1 747.3 L597.1 747.7 L597.1 748 L597.1 748.3"/>
<path d="M604.6 715.4 L603.9 715.6 L602.9 715.8 L601.7 716 L600.5 716.4 L599.2 716.8 L598.1 717.3 L597.1 717.9 L596.1 718.7 L595.1 719.5 L594.2 720.4 L593.3 721.3 L592.6 722.2 L592 723.2 L591.5 724.2 L591.1 725.3 L590.7 726.4 L590.4 727.4 L590.1 728.5 L589.9 729.4 L589.8 730.4 L589.7 731.4 L589.6 732.3 L589.6 733.3 L589.6 734.2 L589.7 735.1 L589.8 736 L590 737 L590.1 737.9 L590.3 738.8 L590.5 739.7 L590.7 740.7 L591 741.7 L591.2 742.7 L591.5 743.7 L591.7 744.6 L591.9 745.5 L592 746.2 L592.1 747 L592.1 747.7 L592.2 748.4 L592.2 748.9 L592.2 749.3"/>
<path d="M604.2 704.2 L603.2 704.5 L601.8 704.8 L600.3 705.1 L598.6 705.6 L596.9 706.1 L595.4 706.8 L594 707.7 L592.6 708.7 L591.3 709.8 L590 711 L588.8 712.3 L587.8 713.6 L587 714.9 L586.3 716.3 L585.8 717.7 L585.3 719.2 L584.9 720.6 L584.5 722 L584.2 723.3 L584 724.7 L583.9 726 L583.8 727.2 L583.8 728.5 L583.8 729.8 L583.9 731.1 L584.1 732.3 L584.3 733.5 L584.5 734.8 L584.7 736 L585 737.3 L585.3 738.6 L585.6 740 L586 741.3 L586.3 742.7 L586.7 744 L586.9 745.1 L587.1 746.2 L587.2 747.2 L587.2 748.2 L587.3 749.1 L587.3 749.8 L587.3 750.3"/>
<path d="M603.8 694.3 L602.6 694.6 L600.9 695 L598.9 695.4 L596.8 696 L594.8 696.6 L592.9 697.5 L591.2 698.6 L589.5 699.8 L587.9 701.2 L586.3 702.7 L584.9 704.3 L583.6 705.8 L582.6 707.5 L581.7 709.2 L581 711 L580.4 712.8 L579.9 714.5 L579.5 716.2 L579.2 717.9 L578.9 719.5 L578.7 721.1 L578.7 722.7 L578.6 724.3 L578.7 725.9 L578.8 727.5 L578.9 729 L579.2 730.5 L579.5 732 L579.8 733.6 L580.1 735.1 L580.5 736.8 L580.9 738.5 L581.3 740.1 L581.8 741.8 L582.2 743.4 L582.4 744.8 L582.6 746.1 L582.8 747.4 L582.8 748.6 L582.9 749.7 L582.9 750.6 L583 751.3"/>
<path d="M594.3 713.6L575.6 734.9"/>
<path d="M590.6 718.5L573.8 725.7"/>
<path d="M596.8 705.8L574.1 727.5"/>
<path d="M602.3 709L573.6 723.9"/>
</g>
<path d="M378.7 747.1 L382.6 747.2 L388.2 747.4 L394.7 747.6 L401.3 747.9 L407.3 748.3 L411.8 748.9 L414.8 749.7 L416.8 750.6 L418.2 751.6 L419.2 752.7 L420.2 754 L421.3 755.4 L422.6 756.9 L423.9 758.6 L425 760.3 L426.1 762.2 L427 764.1 L427.8 766.1 L428.4 768.1 L428.9 770.2 L429.3 772.4 L429.5 774.6 L429.6 776.8 L429.6 779.1 L429.5 781.4 L429.2 783.7 L428.8 786.1 L428.3 788.5 L427.8 790.9 L427.2 793.3 L426.6 795.7 L425.8 798 L425.1 800.3 L424.2 802.7 L423.4 805.1 L422.5 807.5 L421.6 809.9 L420.5 812.3 L419.5 814.6 L418.4 817.2 L417.5 819.9 L416.6 822.9 L415.8 826.6 L415.1 830.9 L414.4 835.4 L413.8 839.7 L413.4 843.4 L413 846 L353.7 846 L372.4 747.1Z" fill="#bfbebd" stroke="#7d7d7d" stroke-width=".9"/>
<path d="M376.3 751.8 L378.3 752.3 L381.1 752.9 L384.4 753.6 L387.9 754.5 L391.2 755.5 L394.1 756.6 L396.6 757.9 L398.9 759.3 L401.1 760.9 L403.2 762.6 L405.2 764.3 L407.1 766.1 L409 767.9 L410.8 769.9 L412.5 771.9 L414.1 773.9 L415.4 775.9 L416.6 777.9 L417.5 779.9 L418.2 781.8 L418.8 783.8 L419.1 785.8 L419.4 787.7 L419.5 789.7 L419.5 791.7 L419.4 793.7 L419.1 795.6 L418.8 797.6 L418.3 799.6 L417.8 801.6 L417.2 803.6 L416.4 805.5 L415.6 807.4 L414.7 809.4 L413.8 811.4 L413 813.4 L412.2 815.4 L411.4 817.4 L410.6 819.5 L409.8 821.6 L409 823.9 L408.3 826.5 L407.6 829.6 L406.9 833.2 L406.2 837.1 L405.6 840.7 L405.1 843.8 L404.7 846 L353.7 846 L371.5 751.8Z" fill="#b1b0af" stroke="#757575" stroke-width=".9"/>
<clipPath id="c368"><path d="M376.3 751.8 L378.3 752.3 L381.1 752.9 L384.4 753.6 L387.9 754.5 L391.2 755.5 L394.1 756.6 L396.6 757.9 L398.9 759.3 L401.1 760.9 L403.2 762.6 L405.2 764.3 L407.1 766.1 L409 767.9 L410.8 769.9 L412.5 771.9 L414.1 773.9 L415.4 775.9 L416.6 777.9 L417.5 779.9 L418.2 781.8 L418.8 783.8 L419.1 785.8 L419.4 787.7 L419.5 789.7 L419.5 791.7 L419.4 793.7 L419.1 795.6 L418.8 797.6 L418.3 799.6 L417.8 801.6 L417.2 803.6 L416.4 805.5 L415.6 807.4 L414.7 809.4 L413.8 811.4 L413 813.4 L412.2 815.4 L411.4 817.4 L410.6 819.5 L409.8 821.6 L409 823.9 L408.3 826.5 L407.6 829.6 L406.9 833.2 L406.2 837.1 L405.6 840.7 L405.1 843.8 L404.7 846 L353.7 846 L371.5 751.8Z"/></clipPath>
<g clip-path="url(#c368)" stroke="#6a6a6a" stroke-width=".85" fill="none">
<path d="M360.8 838L378.3 752.3"/>
<path d="M360.8 838L391.2 755.5"/>
<path d="M363.8 838L393 755.5"/>
<path d="M360.8 838L398.9 759.3"/>
<path d="M360.8 838L409 767.9"/>
<path d="M360.8 838L414.1 773.9"/>
<path d="M363.8 838L415.9 773.9"/>
<path d="M360.8 838L417.5 779.9"/>
<path d="M360.8 838L419.4 787.7"/>
<path d="M360.8 838L419.1 795.6"/>
<path d="M363.8 838L420.9 795.6"/>
<path d="M360.8 838L417.2 803.6"/>
<path d="M360.8 838L414.7 809.4"/>
<path d="M360.8 838L410.6 819.5"/>
<path d="M363.8 838L412.4 819.5"/>
<path d="M360.8 838L407.6 829.6"/>
<path d="M360.8 838L405.6 840.7"/>
<path d="M364.2 819 L364.6 819.1 L365.3 819.3 L366 819.4 L366.8 819.6 L367.5 819.8 L368.1 820.1 L368.7 820.4 L369.2 820.7 L369.7 821 L370.1 821.4 L370.6 821.8 L371 822.2 L371.4 822.6 L371.8 823 L372.2 823.4 L372.5 823.9 L372.8 824.3 L373.1 824.8 L373.3 825.2 L373.4 825.6 L373.5 826.1 L373.6 826.5 L373.7 826.9 L373.7 827.4 L373.7 827.8 L373.7 828.2 L373.6 828.7 L373.6 829.1 L373.5 829.6 L373.3 830 L373.2 830.4 L373 830.8 L372.9 831.3 L372.7 831.7 L372.5 832.1 L372.3 832.6 L372.1 833 L371.9 833.5 L371.8 833.9 L371.6 834.4 L371.4 834.9 L371.2 835.5 L371.1 836.2 L370.9 837 L370.8 837.8 L370.7 838.6 L370.5 839.3 L370.5 839.8"/>
<path d="M366.4 807 L367.1 807.1 L368.1 807.4 L369.3 807.6 L370.5 807.9 L371.7 808.3 L372.8 808.7 L373.7 809.2 L374.5 809.7 L375.3 810.2 L376.1 810.9 L376.8 811.5 L377.5 812.1 L378.1 812.8 L378.8 813.5 L379.4 814.2 L380 814.9 L380.5 815.6 L380.9 816.4 L381.2 817.1 L381.5 817.8 L381.7 818.5 L381.8 819.2 L381.9 819.9 L381.9 820.6 L381.9 821.3 L381.9 822 L381.8 822.8 L381.7 823.5 L381.5 824.2 L381.3 824.9 L381.1 825.6 L380.8 826.3 L380.5 827 L380.2 827.7 L379.9 828.4 L379.6 829.1 L379.3 829.9 L379 830.6 L378.7 831.3 L378.4 832.1 L378.2 832.9 L377.9 833.9 L377.6 835 L377.4 836.3 L377.1 837.7 L376.9 839 L376.7 840.1 L376.6 840.9"/>
<path d="M368.6 794.9 L369.5 795.1 L370.9 795.4 L372.6 795.8 L374.3 796.2 L376 796.7 L377.5 797.3 L378.7 797.9 L379.9 798.7 L381 799.5 L382 800.3 L383 801.2 L384 802 L384.9 803 L385.8 803.9 L386.6 804.9 L387.4 805.9 L388.1 807 L388.7 808 L389.2 808.9 L389.5 809.9 L389.8 810.9 L390 811.9 L390.1 812.9 L390.1 813.9 L390.2 814.8 L390.1 815.8 L390 816.8 L389.8 817.8 L389.6 818.8 L389.3 819.8 L389 820.8 L388.6 821.7 L388.2 822.7 L387.8 823.7 L387.3 824.7 L386.9 825.7 L386.5 826.7 L386.1 827.7 L385.7 828.7 L385.3 829.8 L384.9 831 L384.6 832.2 L384.2 833.8 L383.8 835.6 L383.5 837.5 L383.2 839.4 L382.9 840.9 L382.8 842"/>
<path d="M371 781.1 L372.3 781.4 L374.2 781.8 L376.4 782.3 L378.7 782.9 L380.9 783.5 L382.8 784.3 L384.4 785.1 L386 786.1 L387.4 787.1 L388.8 788.2 L390.1 789.4 L391.4 790.5 L392.6 791.8 L393.8 793 L394.9 794.3 L395.9 795.7 L396.9 797 L397.6 798.3 L398.2 799.6 L398.7 800.9 L399 802.2 L399.3 803.5 L399.4 804.8 L399.5 806.1 L399.6 807.4 L399.5 808.7 L399.3 810 L399.1 811.4 L398.8 812.7 L398.4 814 L398 815.3 L397.5 816.5 L397 817.8 L396.4 819.1 L395.8 820.4 L395.3 821.8 L394.7 823.1 L394.2 824.4 L393.7 825.8 L393.1 827.2 L392.6 828.7 L392.2 830.4 L391.7 832.5 L391.2 834.9 L390.8 837.4 L390.4 839.8 L390 841.8 L389.8 843.3"/>
<path d="M373.5 767.3 L375.1 767.7 L377.4 768.2 L380.1 768.8 L383 769.5 L385.7 770.3 L388.1 771.3 L390.1 772.3 L392.1 773.5 L393.9 774.8 L395.6 776.2 L397.2 777.6 L398.8 779 L400.3 780.5 L401.8 782.1 L403.2 783.8 L404.5 785.4 L405.6 787.1 L406.6 788.7 L407.3 790.3 L407.9 791.9 L408.3 793.6 L408.6 795.2 L408.8 796.8 L408.9 798.4 L408.9 800 L408.8 801.6 L408.6 803.3 L408.3 804.9 L408 806.5 L407.5 808.2 L407 809.8 L406.4 811.3 L405.7 812.9 L405 814.5 L404.3 816.2 L403.6 817.8 L402.9 819.5 L402.3 821.1 L401.6 822.8 L401 824.6 L400.3 826.5 L399.8 828.6 L399.2 831.1 L398.6 834.1 L398 837.2 L397.5 840.2 L397.1 842.8 L396.8 844.6"/>
<path d="M387 794.5L417.8 801.6"/>
<path d="M394.4 768.7L415.6 807.4"/>
<path d="M389.1 761.2L418.3 799.6"/>
<path d="M396.3 782.8L417.2 803.6"/>
</g>
<path d="M606.9 763.7 L605 764.1 L602.4 764.7 L599.2 765.3 L595.9 766.1 L592.6 767 L589.6 768 L586.8 769.1 L583.9 770.4 L581.1 771.8 L578.4 773.3 L575.9 775 L573.7 776.7 L571.8 778.6 L570 780.6 L568.5 782.7 L567.2 784.9 L566 787.2 L565.1 789.7 L564.4 792.3 L563.9 795.1 L563.5 798.1 L563.4 801.1 L563.4 804.1 L563.6 807 L564 809.8 L564.7 812.6 L565.6 815.3 L566.5 818.1 L567.3 821.1 L567.9 824.3 L568.3 828 L568.7 832.3 L568.9 836.7 L569.1 840.9 L569.3 844.5 L569.4 847 L617.9 847 L612.8 763.7Z" fill="#bcbcbc" stroke="#7d7d7d" stroke-width=".9"/>
<path d="M607.8 773.8 L606.1 774 L603.7 774.3 L601 774.7 L598 775.2 L595.1 775.8 L592.5 776.7 L590.1 777.8 L587.8 779 L585.5 780.4 L583.3 782 L581.3 783.6 L579.5 785.4 L577.9 787.3 L576.5 789.4 L575.2 791.5 L574.1 793.8 L573.1 796.1 L572.3 798.4 L571.7 800.7 L571.2 803 L570.9 805.3 L570.8 807.7 L570.7 810.2 L570.8 812.8 L571.1 815.5 L571.5 818.4 L572.2 821.3 L572.8 824.3 L573.3 827.2 L573.7 830.1 L573.9 833.1 L573.9 836.4 L573.9 839.6 L573.8 842.6 L573.7 845.2 L573.7 847 L617.9 847 L613.4 773.8Z" fill="#cacaca" stroke="#757575" stroke-width=".9"/>
<clipPath id="c399"><path d="M607.8 773.8 L606.1 774 L603.7 774.3 L601 774.7 L598 775.2 L595.1 775.8 L592.5 776.7 L590.1 777.8 L587.8 779 L585.5 780.4 L583.3 782 L581.3 783.6 L579.5 785.4 L577.9 787.3 L576.5 789.4 L575.2 791.5 L574.1 793.8 L573.1 796.1 L572.3 798.4 L571.7 800.7 L571.2 803 L570.9 805.3 L570.8 807.7 L570.7 810.2 L570.8 812.8 L571.1 815.5 L571.5 818.4 L572.2 821.3 L572.8 824.3 L573.3 827.2 L573.7 830.1 L573.9 833.1 L573.9 836.4 L573.9 839.6 L573.8 842.6 L573.7 845.2 L573.7 847 L617.9 847 L613.4 773.8Z"/></clipPath>
<g clip-path="url(#c399)" stroke="#6a6a6a" stroke-width=".85" fill="none">
<path d="M611.3 837.5L607.8 773.8"/>
<path d="M611.3 837.5L598 775.2"/>
<path d="M608.3 837.5L596.2 775.2"/>
<path d="M611.3 837.5L590.1 777.8"/>
<path d="M611.3 837.5L583.3 782"/>
<path d="M611.3 837.5L579.5 785.4"/>
<path d="M608.3 837.5L577.7 785.4"/>
<path d="M611.3 837.5L576.5 789.4"/>
<path d="M611.3 837.5L573.1 796.1"/>
<path d="M611.3 837.5L571.2 803"/>
<path d="M608.3 837.5L569.4 803"/>
<path d="M611.3 837.5L570.7 810.2"/>
<path d="M611.3 837.5L571.5 818.4"/>
<path d="M611.3 837.5L573.3 827.2"/>
<path d="M608.3 837.5L571.5 827.2"/>
<path d="M611.3 837.5L573.9 833.1"/>
<path d="M611.3 837.5L573.8 842.6"/>
<path d="M610.8 827.9 L610.5 828 L610.2 828 L609.7 828.1 L609.3 828.2 L608.9 828.3 L608.5 828.4 L608.1 828.5 L607.8 828.7 L607.4 828.9 L607.1 829.2 L606.8 829.4 L606.5 829.7 L606.3 830 L606.1 830.3 L605.9 830.6 L605.7 830.9 L605.6 831.3 L605.4 831.6 L605.4 832 L605.3 832.3 L605.2 832.7 L605.2 833 L605.2 833.4 L605.2 833.8 L605.3 834.2 L605.3 834.6 L605.4 835.1 L605.5 835.5 L605.6 836 L605.7 836.4 L605.7 836.8 L605.7 837.3 L605.7 837.8 L605.7 838.3 L605.7 838.6 L605.7 838.9"/>
<path d="M610.4 821.6 L610 821.6 L609.4 821.7 L608.7 821.8 L608 821.9 L607.2 822.1 L606.6 822.3 L606 822.6 L605.4 822.9 L604.8 823.2 L604.3 823.6 L603.8 824 L603.3 824.5 L602.9 825 L602.6 825.5 L602.3 826 L602 826.6 L601.8 827.2 L601.5 827.7 L601.4 828.3 L601.3 828.9 L601.2 829.5 L601.2 830.1 L601.2 830.7 L601.2 831.3 L601.2 832 L601.4 832.7 L601.5 833.4 L601.7 834.2 L601.8 834.9 L601.9 835.6 L601.9 836.4 L602 837.2 L601.9 838 L601.9 838.8 L601.9 839.4 L601.9 839.9"/>
<path d="M610 814.6 L609.4 814.7 L608.6 814.8 L607.6 814.9 L606.5 815.1 L605.5 815.3 L604.5 815.6 L603.7 816 L602.8 816.4 L602 817 L601.2 817.5 L600.5 818.1 L599.9 818.7 L599.3 819.4 L598.8 820.2 L598.3 821 L597.9 821.8 L597.5 822.6 L597.3 823.4 L597 824.2 L596.9 825.1 L596.8 825.9 L596.7 826.8 L596.7 827.7 L596.7 828.6 L596.8 829.6 L597 830.6 L597.2 831.7 L597.4 832.7 L597.6 833.8 L597.8 834.8 L597.8 835.9 L597.8 837.1 L597.8 838.3 L597.8 839.3 L597.8 840.3 L597.8 840.9"/>
<path d="M609.5 805.6 L608.7 805.8 L607.5 805.9 L606.1 806.1 L604.6 806.3 L603.2 806.7 L601.9 807.1 L600.7 807.6 L599.5 808.3 L598.4 809 L597.3 809.7 L596.3 810.6 L595.4 811.5 L594.6 812.4 L593.9 813.4 L593.2 814.5 L592.7 815.7 L592.2 816.8 L591.8 818 L591.5 819.1 L591.3 820.2 L591.1 821.4 L591 822.6 L591 823.9 L591 825.1 L591.2 826.5 L591.4 827.9 L591.7 829.4 L592 830.9 L592.3 832.4 L592.5 833.8 L592.6 835.3 L592.6 836.9 L592.6 838.6 L592.6 840.1 L592.5 841.3 L592.5 842.2"/>
<path d="M609 795.5 L607.9 795.6 L606.3 795.8 L604.5 796.1 L602.5 796.4 L600.6 796.8 L598.9 797.4 L597.3 798.1 L595.8 798.9 L594.3 799.8 L592.8 800.8 L591.5 801.9 L590.3 803.1 L589.3 804.4 L588.3 805.7 L587.5 807.2 L586.7 808.7 L586.1 810.2 L585.6 811.7 L585.1 813.2 L584.8 814.7 L584.6 816.3 L584.5 817.9 L584.5 819.5 L584.6 821.2 L584.7 823 L585.1 824.9 L585.5 826.8 L585.9 828.8 L586.2 830.7 L586.5 832.6 L586.6 834.6 L586.6 836.8 L586.6 838.9 L586.6 840.9 L586.5 842.6 L586.5 843.8"/>
<path d="M608.4 785.3 L607 785.5 L605.1 785.7 L602.8 786 L600.4 786.4 L598 786.9 L595.9 787.6 L593.9 788.5 L592 789.5 L590.1 790.7 L588.4 792 L586.7 793.3 L585.2 794.8 L583.9 796.3 L582.7 798 L581.7 799.8 L580.8 801.7 L580 803.6 L579.3 805.4 L578.8 807.3 L578.4 809.2 L578.2 811.1 L578.1 813.1 L578 815.1 L578.1 817.2 L578.3 819.5 L578.7 821.8 L579.2 824.2 L579.7 826.6 L580.2 829.1 L580.5 831.4 L580.6 833.9 L580.6 836.6 L580.6 839.2 L580.6 841.7 L580.5 843.8 L580.5 845.3"/>
<path d="M581.5 792.8L573.7 845.2"/>
<path d="M583 795L573.9 836.4"/>
<path d="M600.1 794.8L572.8 824.3"/>
<path d="M606.3 795.7L570.9 805.3"/>
</g>
<path d="M426.3 515L439.3 515L433.4 539L419.4 539Z" fill="#c9c9c9" stroke="#9a9a9a" stroke-width=".6"/>
<path d="M598.2 519L588.7 519L589.5 539L599.5 539Z" fill="#d4d4d4" stroke="#9a9a9a" stroke-width=".6"/>
<path d="M397.8 633L411.8 633L407.7 653L392.7 653Z" fill="#c9c9c9" stroke="#9a9a9a" stroke-width=".6"/>
<path d="M604.7 634L594.7 634L597.1 676L607.1 676Z" fill="#cfcfcf" stroke="#9a9a9a" stroke-width=".6"/>
<path d="M393.3 655 L391.7 662.2 L390.1 669.5 L388.6 676.8 L387.1 684 L385.6 691.2 L384.3 698.5 L382.9 705.8 L381.6 713 L380.3 720.2 L379 727.5 L377.7 734.8 L376.3 742 L388.8 742 L390.2 734.8 L391.5 727.5 L392.8 720.2 L394.1 713 L395.4 705.8 L396.8 698.5 L398.1 691.2 L399.6 684 L401.1 676.8 L402.6 669.5 L404.2 662.2 L405.8 655Z" fill="#fff" fill-opacity="0.16"/>
<path d="M405.8 655 L404.2 662.2 L402.6 669.5 L401.1 676.8 L399.6 684 L398.1 691.2 L396.8 698.5 L395.4 705.8 L394.1 713 L392.8 720.2 L391.5 727.5 L390.2 734.8 L388.8 742" fill="none" stroke="#8e8e8e" stroke-opacity=".7" stroke-width=".6"/>
<path d="M606.1 676 L606.5 681.7 L606.8 687.3 L607.1 693 L607.2 698.7 L607.4 704.3 L607.5 710 L607.7 715.7 L607.8 721.3 L608 727 L608.2 732.7 L608.5 738.3 L608.7 744 L600.2 744 L600 738.3 L599.7 732.7 L599.5 727 L599.3 721.3 L599.2 715.7 L599 710 L598.9 704.3 L598.7 698.7 L598.6 693 L598.3 687.3 L598 681.7 L597.6 676Z" fill="#fff" fill-opacity="0.1"/>
<path d="M597.6 676 L598 681.7 L598.3 687.3 L598.6 693 L598.7 698.7 L598.9 704.3 L599 710 L599.2 715.7 L599.3 721.3 L599.5 727 L599.7 732.7 L600 738.3 L600.2 744" fill="none" stroke="#8e8e8e" stroke-opacity=".7" stroke-width=".6"/>
<path d="M598.7 543 L599.1 549.9 L599.5 556.8 L599.8 563.8 L600.2 570.7 L600.6 577.6 L601 584.5 L601.4 591.4 L601.8 598.3 L602.1 605.2 L602.5 612.2 L602.9 619.1 L603.3 626 L595.3 626 L594.9 619.1 L594.5 612.2 L594.1 605.2 L593.8 598.3 L593.4 591.4 L593 584.5 L592.6 577.6 L592.2 570.7 L591.8 563.8 L591.5 556.8 L591.1 549.9 L590.7 543Z" fill="#fff" fill-opacity="0.08"/>
<path d="M590.7 543 L591.1 549.9 L591.5 556.8 L591.8 563.8 L592.2 570.7 L592.6 577.6 L593 584.5 L593.4 591.4 L593.8 598.3 L594.1 605.2 L594.5 612.2 L594.9 619.1 L595.3 626" fill="none" stroke="#8e8e8e" stroke-opacity=".7" stroke-width=".6"/>
<path d="M517.8 215.2C540 213.9 562 214.4 576.3 219" stroke="#1c1c1c" stroke-width="2.2" fill="none" stroke-linecap="butt"/>
<path d="M510.2 236C535 234.8 562 235.4 578.9 241.9" stroke="#2e2e2e" stroke-width="4.4" fill="none" stroke-linecap="butt"/>
<path d="M464 386.8C505 385.4 550 385.6 587.4 389.6" stroke="#303030" stroke-width="4.1" fill="none" stroke-linecap="butt"/>
<path d="M454.3 425 Q524.2 422.7 589.3 426.9" stroke="#161616" stroke-width="2.0" fill="none" stroke-linecap="butt"/>
<path d="M422.9 539.3 Q510.6 539.4 596 540.3" stroke="#2c2c2c" stroke-width="4.0" fill="none" stroke-linecap="butt"/>
<path d="M396.9 653.2 Q503.8 661.2 601 654" stroke="#161616" stroke-width="2.0" fill="none" stroke-linecap="butt"/>
<path d="M388.5 689.6 Q506.7 702.4 603.6 690.8" stroke="#2e2e2e" stroke-width="3.8" fill="none" stroke-linecap="butt"/>
</g>
</g>
<circle cx="431.9" cy="509.1" r="1.7" fill="#fff"/>
<rect x="472.6" y="507.5" width="3.2" height="3.2" fill="#fff"/>
<circle cx="517.8" cy="511.1" r="1.7" fill="#fff"/>
<circle cx="560.3" cy="513" r="1.7" fill="#fff"/>
<circle cx="594.1" cy="516.9" r="1.7" fill="#fff"/>
<circle cx="403.6" cy="625.8" r="1.7" fill="#fff"/>
<rect x="442.4" y="624.7" width="3.2" height="3.2" fill="#fff"/>
<circle cx="485.3" cy="628.7" r="1.7" fill="#fff"/>
<rect x="524.6" y="628.4" width="3.2" height="3.2" fill="#fff"/>
<circle cx="566.5" cy="630" r="1.7" fill="#fff"/>
<circle cx="600.5" cy="630" r="1.7" fill="#fff"/>
<circle cx="378.9" cy="744.4" r="1.7" fill="#fff"/>
<rect x="422.9" y="743.9" width="3.2" height="3.2" fill="#fff"/>
<circle cx="471.2" cy="747.8" r="1.7" fill="#fff"/>
<rect x="516.7" y="747.7" width="3.2" height="3.2" fill="#fff"/>
<circle cx="564.5" cy="748.4" r="1.7" fill="#fff"/>
<circle cx="605.8" cy="746.4" r="1.7" fill="#fff"/>
<circle cx="530.1" cy="175.3" r="1.1" fill="#d8ffd8" stroke="#19a619" stroke-width=".9"/>
<circle cx="499.4" cy="267.9" r="1.1" fill="#d8ffd8" stroke="#19a619" stroke-width=".9"/>
<circle cx="443.6" cy="458.2" r="1.1" fill="#d8ffd8" stroke="#19a619" stroke-width=".9"/>
<circle cx="397.4" cy="649.3" r="1.1" fill="#d8ffd8" stroke="#19a619" stroke-width=".9"/>
<rect x="565.9" y="92.3" width="3" height="3" fill="#0b1420"/>
<rect x="570" y="145" width="2.4" height="2.4" fill="#10151c"/>
<rect x="572.7" y="187.6" width="2.4" height="2.4" fill="#10151c"/>
<rect x="576.3" y="239.6" width="2.4" height="2.4" fill="#10151c"/>
<rect x="581.4" y="314.1" width="2.4" height="2.4" fill="#10151c"/>
<rect x="589.8" y="461.8" width="2.4" height="2.4" fill="#10151c"/>
<rect x="598.2" y="605.3" width="2.4" height="2.4" fill="#10151c"/>
<rect x="605.5" y="757.8" width="2.4" height="2.4" fill="#10151c"/>
<g id="gizmo" fill="none" stroke-width="1.5">
<path d="M610.8 837.8L610.4 785" stroke="#20b820"/>
<path d="M611 837.8H659M655 834.6l4.6 3.2-4.6 3.2" stroke="#b42c38"/>
<path d="M611 838l5.4 17" stroke="#2424dc" stroke-width="1.3" stroke-dasharray="2.4 1.2"/><path d="M612.8 853.2l6-1.2" stroke="#2424dc" stroke-width="1.2"/>
</g>
<clipPath id="lg482b"><path clip-rule="evenodd" d="M-2000 -2000H4000V4000H-2000Z M838.53 820.81a37.73 45.40 0 1 1 75.47 0a37.73 45.40 0 1 1 -75.47 0Z"/></clipPath>
<path d="M836.18 831.69a39.96 39.96 0 1 1 79.92 0a39.96 39.96 0 1 1 -79.92 0Z" fill="#2f4c97" clip-path="url(#lg482b)"/>
<clipPath id="lg482o"><path clip-rule="evenodd" d="M-2000 -2000H4000V4000H-2000Z M844.82 826.58a34.23 34.23 0 1 1 68.46 0a34.23 34.23 0 1 1 -68.46 0Z"/></clipPath>
<path d="M839.15 828.60a36.25 36.25 0 1 1 72.50 0a36.25 36.25 0 1 1 -72.50 0Z" fill="#ec7429" clip-path="url(#lg482o)"/>
<path d="M888.6 795.4 C899.2 806.6 906.6 820.8 906.6 831.9 C906.6 839.4 902.9 845.5 897.7 851.5 C893 846.8 878.1 844.3 861.4 848.6 C873.2 842.5 883.1 831.9 887.4 820.8 C889.3 812.1 889 803.5 888.6 795.4 Z" fill="#ec7429"/>
<path d="M880.2 795.8 C887.4 804.1 889.3 813.4 885.3 822.7 C881.8 829.5 878.1 834.4 874.4 836.4 C868.2 836.3 862 837.5 855 840.1 C869.5 832.6 881.8 820.8 880.2 795.8 Z" fill="#2f4c97"/>
<clipPath id="lg488b"><path clip-rule="evenodd" d="M-2000 -2000H4000V4000H-2000Z M915.52 889.36a14.72 17.71 0 1 1 29.43 0a14.72 17.71 0 1 1 -29.43 0Z"/></clipPath>
<path d="M914.60 893.61a15.58 15.58 0 1 1 31.17 0a15.58 15.58 0 1 1 -31.17 0Z" fill="#2f4c97" clip-path="url(#lg488b)"/>
<clipPath id="lg488o"><path clip-rule="evenodd" d="M-2000 -2000H4000V4000H-2000Z M917.97 891.61a13.35 13.35 0 1 1 26.70 0a13.35 13.35 0 1 1 -26.70 0Z"/></clipPath>
<path d="M915.76 892.40a14.14 14.14 0 1 1 28.27 0a14.14 14.14 0 1 1 -28.27 0Z" fill="#ec7429" clip-path="url(#lg488o)"/>
<path d="M935.1 879.5 C939.2 883.8 942.1 889.4 942.1 893.7 C942.1 896.6 940.6 899 938.6 901.3 C936.8 899.5 931 898.5 924.4 900.2 C929 897.8 932.9 893.7 934.6 889.4 C935.3 886 935.2 882.6 935.1 879.5 Z" fill="#ec7429"/>
<path d="M931.8 879.6 C934.6 882.8 935.3 886.5 933.8 890.1 C932.4 892.7 931 894.7 929.5 895.4 C927.1 895.4 924.7 895.9 921.9 896.9 C927.6 893.9 932.4 889.4 931.8 879.6 Z" fill="#2f4c97"/>
<g font-family="'Liberation Serif',serif" fill="#2f4c97" stroke="#2f4c97" stroke-width=".45">
<text transform="translate(781.4 906.4) scale(0.9 1)" font-size="37.7">P</text>
<text transform="translate(804.1 906.4) scale(0.99 1)" font-size="32.2">R</text>
<text transform="translate(827.1 906.4) scale(0.79 1)" font-size="32.2">E</text>
<text transform="translate(845 906.4) scale(0.97 1)" font-size="32.2">C</text>
<text transform="translate(869.7 906.4) scale(0.93 1)" font-size="32.2">I</text>
<text transform="translate(883.5 906.4) scale(0.75 1)" font-size="32.2">S</text>
<text transform="translate(901.4 906.4) scale(0.93 1)" font-size="32.2">I</text>
<text transform="translate(947 906.4) scale(1.0 1)" font-size="32.2">N</text>
</g>
<g font-family="'Liberation Serif',serif" fill="#030304" stroke="#030304" stroke-width=".35" font-size="19.5">
<text x="834.5" y="929.3">S</text>
<text x="851.5" y="929.3">A</text>
<text x="870.2" y="929.3">I</text>
<text x="881.6" y="929.3">L</text>
<text x="909.4" y="929.3">S</text>
</g>
<path d="M788 923.3L821 922.5L821.8 923.3L821 924.1L788 923.3Z M966 923.3L934 922.5L933 923.3L934 924.1Z" fill="#060607"/>
</svg>
<div id="edge"></div>
<div id="info"><div class="t">Main\ Mainsail IMS</div><div class="b"><div class="r">Area = 45.269 m²</div><div class="r">Ratio = 3.01</div><div class="r">[Luff] = 15.183 m</div><div class="r">[Geofoot] = 5.073 m</div><div class="r">[Geoleech] = 15.758 m</div><div class="r">[MGL] = 4.242 m</div><div class="r">[MGM] = 3.086 m</div><div class="r">[MGU] = 1.690 m</div><div class="r">[MGT] = 0.921 m</div></div></div>
<div id="tb"><div class="sel"></div><div class="o"></div>
<span style="left:4.5px">normal</span><i style="left:44.5px"></i>
<span style="left:58.5px">mould</span><i style="left:94.2px"></i>
<span style="left:109px">frame</span><i style="left:144.1px"></i>
<span style="left:158.5px">Panel check</span><i style="left:222.3px"></i>
<span style="left:236.5px">Skeleton</span><i style="left:285.1px"></i>
<span style="left:312px">Options</span><i style="left:352.1px"></i>
</div>
</body></html>
